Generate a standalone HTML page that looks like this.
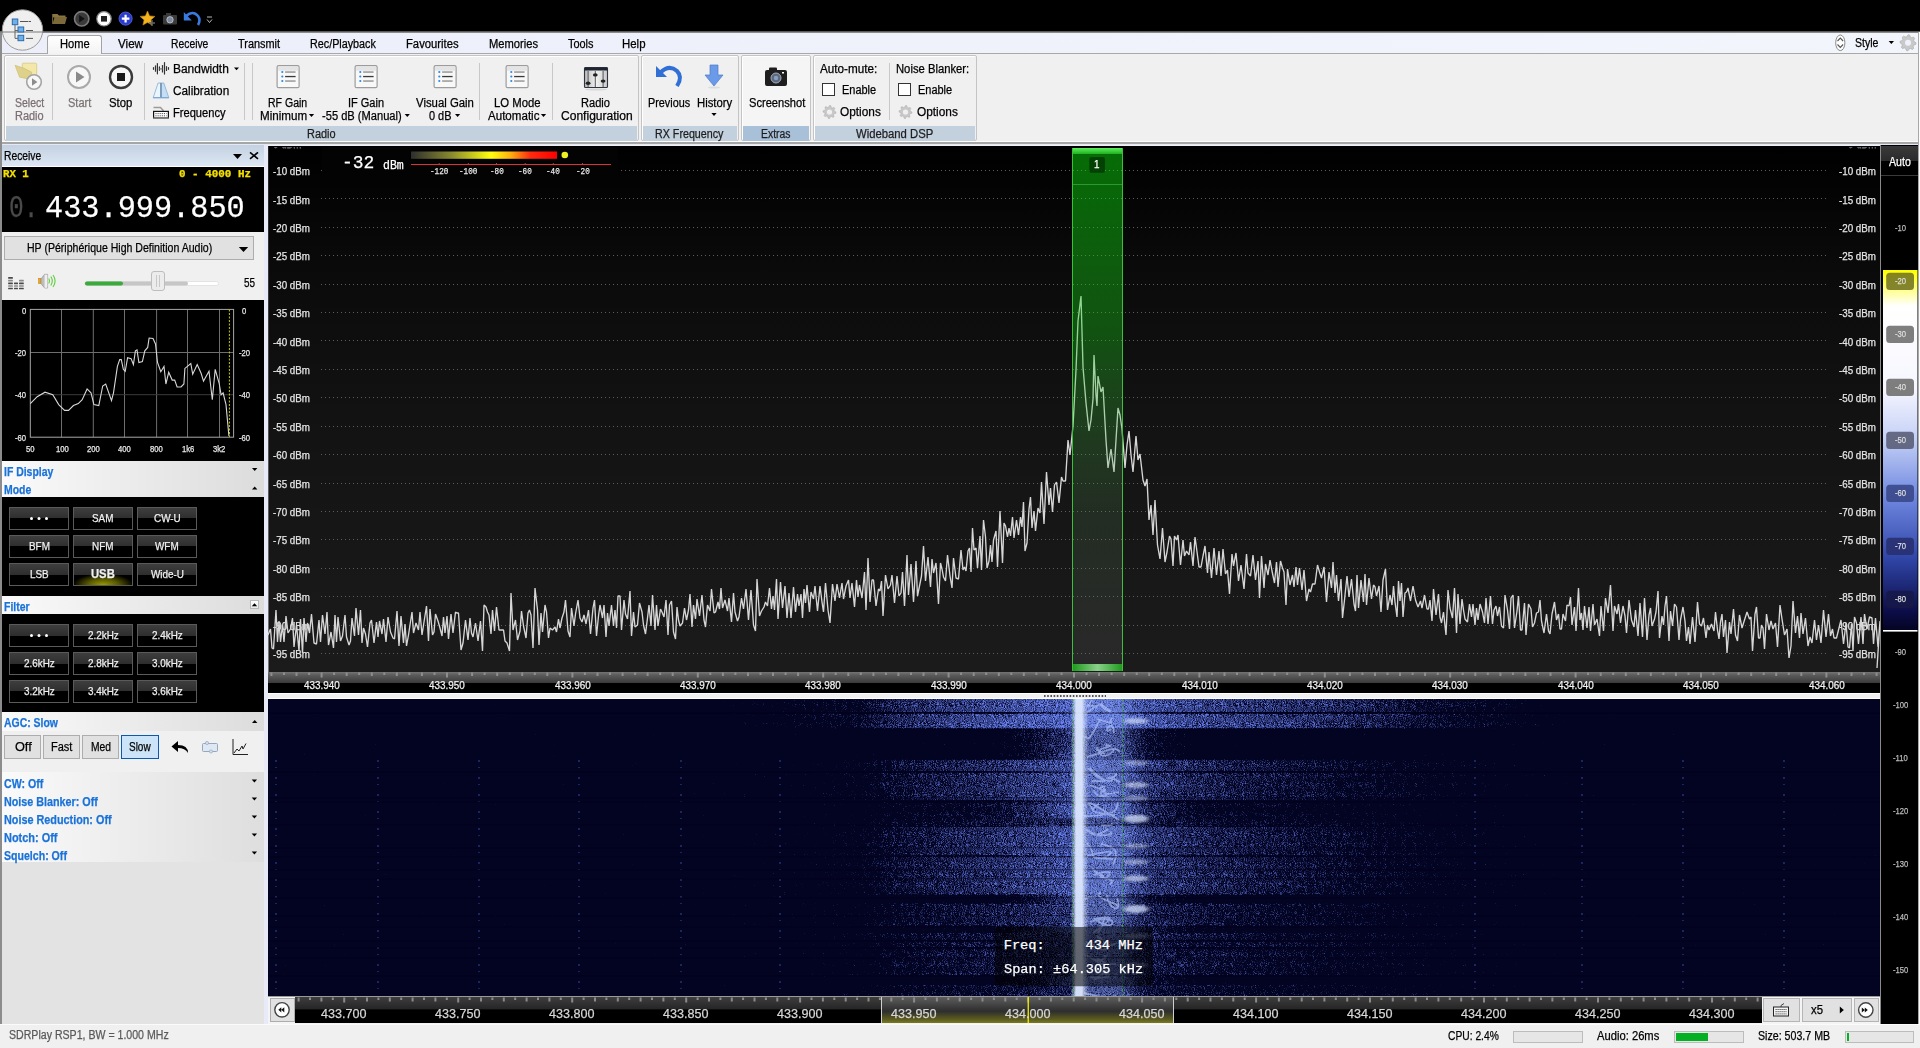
<!DOCTYPE html>
<html><head><meta charset="utf-8"><title>SDR Console</title>
<style>
html,body{margin:0;padding:0;}
body{width:1920px;height:1048px;overflow:hidden;position:relative;background:#f0f0f0;font-family:"Liberation Sans",sans-serif;}
.a{position:absolute;box-sizing:border-box;}
.t{position:absolute;white-space:nowrap;-webkit-text-stroke:0.25px currentColor;}
svg.a{overflow:visible;}
</style></head><body>

<div class="a" style="left:0px;top:0px;width:1920px;height:32px;background:#000"></div>
<div class="a" style="left:0px;top:32px;width:1920px;height:22px;background:linear-gradient(90deg,#eceffa,#f2f5fc);border-top:1px solid #8a8a8a;border-bottom:1px solid #a9a9a9"></div>
<div class="a" style="left:0px;top:31px;width:1920px;height:1px;background:#5a5a5a"></div>
<div class="a" style="left:0px;top:32px;width:2px;height:993px;background:#8c8c8c"></div>
<div class="a" style="left:1918px;top:32px;width:2px;height:993px;background:#fbfbfb;border-left:1px solid #a8a8a8"></div>
<svg class="a" style="left:0px;top:0px;" width="240" height="32" viewBox="0 0 240 32"><path d="M52.5 14 h5 l1.5 1.5 h6.5 v2 h-13z" fill="#8a7440"/><path d="M52.5 24 l2-7 h12.5 l-2 7z" fill="#7d6a3a"/><path d="M52.5 24 v-10" stroke="#6a5a30" stroke-width="1"/><circle cx="81.7" cy="18.8" r="7.2" fill="#3a3a3a" stroke="#7a7a7a" stroke-width="1.6"/><path d="M79.2 15 l5.5 3.8 -5.5 3.8z" fill="#111"/><circle cx="104" cy="18.8" r="7.2" fill="#fff" stroke="#888" stroke-width="1.2"/><rect x="101" y="16" width="6" height="5.6" fill="#222"/><circle cx="125.6" cy="18.6" r="6.6" fill="#2a3ccf" stroke="#5a6ae0" stroke-width="0.8"/><path d="M125.6 14.8 v7.6 M121.8 18.6 h7.6" stroke="#fff" stroke-width="2.2"/><polygon points="147.50,11.00 149.62,15.89 154.92,16.39 150.92,19.91 152.08,25.11 147.50,22.40 142.92,25.11 144.08,19.91 140.08,16.39 145.38,15.89" fill="#f3b321" stroke="#c98a10" stroke-width="0.6"/><path d="M152 20 v6 M149 23 h6" stroke="#666" stroke-width="1.4"/><rect x="163" y="15" width="14" height="9.5" rx="1" fill="#3a3a3a"/><rect x="166" y="13" width="5" height="2.5" fill="#3a3a3a"/><circle cx="170" cy="19.8" r="3.2" fill="#7a8aa0" stroke="#ccc" stroke-width="0.8"/><path d="M186 16 q7-6 12 0 q3 4 0 9" fill="none" stroke="#3a7ae0" stroke-width="2.6"/><path d="M183.8 12 v8.5 h8z" fill="#3a7ae0"/><path d="M207 17 h5 M207 19.5 l2.5 3 2.5-3" fill="none" stroke="#ccc" stroke-width="0.9"/></svg>
<div class="a" style="left:47px;top:35px;width:55px;height:19px;background:linear-gradient(#ffffff,#f3f3f3);border:1px solid #a3a3a3;border-bottom:none;border-radius:3px 3px 0 0"></div>
<div class="a" style="left:48px;top:53px;width:53px;height:2px;background:#f3f3f3"></div>
<div class="t" style="left:60.30px;top:37.10px;font:normal 12px/14.40px 'Liberation Sans',sans-serif;color:#000;transform:scaleX(0.9281);transform-origin:0 0;">Home</div>
<div class="t" style="left:118.00px;top:37.10px;font:normal 12px/14.40px 'Liberation Sans',sans-serif;color:#000;transform:scaleX(0.9690);transform-origin:0 0;">View</div>
<div class="t" style="left:171.30px;top:37.10px;font:normal 12px/14.40px 'Liberation Sans',sans-serif;color:#000;transform:scaleX(0.8618);transform-origin:0 0;">Receive</div>
<div class="t" style="left:238.00px;top:37.10px;font:normal 12px/14.40px 'Liberation Sans',sans-serif;color:#000;transform:scaleX(0.9091);transform-origin:0 0;">Transmit</div>
<div class="t" style="left:310.00px;top:37.10px;font:normal 12px/14.40px 'Liberation Sans',sans-serif;color:#000;transform:scaleX(0.8980);transform-origin:0 0;">Rec/Playback</div>
<div class="t" style="left:406.00px;top:37.10px;font:normal 12px/14.40px 'Liberation Sans',sans-serif;color:#000;transform:scaleX(0.9375);transform-origin:0 0;">Favourites</div>
<div class="t" style="left:489.40px;top:37.10px;font:normal 12px/14.40px 'Liberation Sans',sans-serif;color:#000;transform:scaleX(0.9317);transform-origin:0 0;">Memories</div>
<div class="t" style="left:568.00px;top:37.10px;font:normal 12px/14.40px 'Liberation Sans',sans-serif;color:#000;transform:scaleX(0.9107);transform-origin:0 0;">Tools</div>
<div class="t" style="left:622.00px;top:37.10px;font:normal 12px/14.40px 'Liberation Sans',sans-serif;color:#000;transform:scaleX(0.9514);transform-origin:0 0;">Help</div>
<svg class="a" style="left:0px;top:0px;pointer-events:none" width="1920" height="60" viewBox="0 0 1920 60"><ellipse cx="1840.3" cy="42.8" rx="4.6" ry="7.8" fill="#fff" stroke="#888" stroke-width="1"/><path d="M1837.5 41 l2.8-3 2.8 3 M1837.5 44.5 l2.8 3 2.8-3" fill="none" stroke="#555" stroke-width="1.1"/><path d="M1888.7 41 h5.3 l-2.65 2.9z" fill="#000"/><polygon points="1916.00,42.80 1915.85,44.36 1913.73,45.17 1913.16,46.24 1913.66,48.46 1912.44,49.45 1910.37,48.53 1909.21,48.88 1908.00,50.80 1906.44,50.65 1905.63,48.53 1904.56,47.96 1902.34,48.46 1901.35,47.24 1902.27,45.17 1901.92,44.01 1900.00,42.80 1900.15,41.24 1902.27,40.43 1902.84,39.36 1902.34,37.14 1903.56,36.15 1905.63,37.07 1906.79,36.72 1908.00,34.80 1909.56,34.95 1910.37,37.07 1911.44,37.64 1913.66,37.14 1914.65,38.36 1913.73,40.43 1914.08,41.59" fill="#c9c9c9" stroke="#aaa" stroke-width="0.6"/><circle cx="1908" cy="42.8" r="3" fill="#eef1fb"/></svg>
<div class="t" style="left:1855.00px;top:35.80px;font:normal 12px/14.40px 'Liberation Sans',sans-serif;color:#000;transform:scaleX(0.8771);transform-origin:0 0;">Style</div>
<div class="a" style="left:2px;top:54px;width:1916px;height:90px;background:#f0f0f0"></div>
<div class="a" style="left:2px;top:141px;width:1916px;height:1px;background:#fdfdfd"></div>
<div class="a" style="left:2px;top:142px;width:1916px;height:2px;background:#a6a6a6"></div>
<div class="a" style="left:2px;top:144px;width:1916px;height:1px;background:#e6e8f8"></div>
<div class="a" style="left:4px;top:55px;width:635px;height:86px;border:1px solid #c4c4c4;border-radius:2px;background:#f0f0f0;box-shadow:inset 1px 1px 0 #fff"></div>
<div class="a" style="left:6px;top:126px;width:631px;height:15px;background:#c3d0dd"></div>
<div class="t" style="left:306.60px;top:127.30px;font:normal 12px/14.40px 'Liberation Sans',sans-serif;color:#1e1e1e;transform:scaleX(0.9124);transform-origin:0 0;">Radio</div>
<div class="a" style="left:641px;top:55px;width:98px;height:86px;border:1px solid #c4c4c4;border-radius:2px;background:#f0f0f0;box-shadow:inset 1px 1px 0 #fff"></div>
<div class="a" style="left:643px;top:126px;width:94px;height:15px;background:#c3d0dd"></div>
<div class="t" style="left:655.30px;top:127.30px;font:normal 12px/14.40px 'Liberation Sans',sans-serif;color:#1e1e1e;transform:scaleX(0.8924);transform-origin:0 0;">RX Frequency</div>
<div class="a" style="left:741px;top:55px;width:70px;height:86px;border:1px solid #c4c4c4;border-radius:2px;background:#f5f5f5;box-shadow:inset 1px 1px 0 #fff"></div>
<div class="a" style="left:743px;top:126px;width:66px;height:15px;background:#a9c0d9"></div>
<div class="t" style="left:761.25px;top:127.30px;font:normal 12px/14.40px 'Liberation Sans',sans-serif;color:#1e1e1e;transform:scaleX(0.8662);transform-origin:0 0;">Extras</div>
<div class="a" style="left:813px;top:55px;width:164px;height:86px;border:1px solid #c4c4c4;border-radius:2px;background:#f0f0f0;box-shadow:inset 1px 1px 0 #fff"></div>
<div class="a" style="left:815px;top:126px;width:160px;height:15px;background:#c3d0dd"></div>
<div class="t" style="left:856.00px;top:127.30px;font:normal 12px/14.40px 'Liberation Sans',sans-serif;color:#1e1e1e;transform:scaleX(0.9415);transform-origin:0 0;">Wideband DSP</div>
<div class="a" style="left:52px;top:63px;width:1px;height:57px;background:#c8c8c8"></div>
<div class="a" style="left:144px;top:63px;width:1px;height:57px;background:#c8c8c8"></div>
<div class="a" style="left:244px;top:63px;width:1px;height:57px;background:#c8c8c8"></div>
<div class="a" style="left:252px;top:63px;width:1px;height:57px;background:#c8c8c8"></div>
<div class="a" style="left:479px;top:63px;width:1px;height:57px;background:#c8c8c8"></div>
<div class="a" style="left:552px;top:63px;width:1px;height:57px;background:#c8c8c8"></div>
<div class="a" style="left:889px;top:63px;width:1px;height:57px;background:#c8c8c8"></div>
<svg class="a" style="left:0px;top:0px;" width="1000" height="150" viewBox="0 0 1000 150"><rect x="22.3" y="63.2" width="14.4" height="11.5" rx="1" fill="#f3e8aa" stroke="#d6c684" stroke-width="0.8"/><polygon points="15.1,65.3 24,68.3 31.8,72.3 30,79.2 19.6,77.2" fill="#ded18a" stroke="#cdbd78" stroke-width="0.7"/><circle cx="34" cy="82" r="7.3" fill="#f7f7f7" stroke="#a4a4a4" stroke-width="1.6"/><path d="M32 78.3 l5.4 3.7 -5.4 3.7z" fill="#8c8c8c"/><circle cx="79" cy="77" r="11" fill="#f7f7f7" stroke="#a9a9a9" stroke-width="2"/><path d="M76 71.5 l8.5 5.5 -8.5 5.5z" fill="#8a8a8a"/><circle cx="121" cy="77" r="11" fill="#f7f7f7" stroke="#3a3a3a" stroke-width="2.4"/><rect x="117" y="73" width="8" height="8" fill="#1a1a1a"/><path d="M153.5 67.7 V69.3" stroke="#333" stroke-width="1.2" stroke-linecap="round"/><path d="M155.5 65.8 V71.2" stroke="#333" stroke-width="1.2" stroke-linecap="round"/><path d="M157.4 63.6 V73.8" stroke="#333" stroke-width="1.2" stroke-linecap="round"/><path d="M159.4 66.9 V70.3" stroke="#333" stroke-width="1.2" stroke-linecap="round"/><path d="M162.5 65.5 V71.9" stroke="#333" stroke-width="1.2" stroke-linecap="round"/><path d="M164.5 62.7 V74.1" stroke="#333" stroke-width="1.2" stroke-linecap="round"/><path d="M166.5 66.7 V70.5" stroke="#333" stroke-width="1.2" stroke-linecap="round"/><path d="M168.5 67.7 V69.3" stroke="#333" stroke-width="1.2" stroke-linecap="round"/><path d="M159.4 68.9 H162.5" stroke="#777" stroke-width="1.2"/><path d="M234 67.5 h5 l-2.5 2.8z" fill="#000"/><polygon points="158.1,83 161,83 161,97.7 153.2,97.7" fill="#eaf5fd" stroke="#8ab6de" stroke-width="0.9"/><polygon points="161,83 163.8,83 168.8,97.7 161,97.7" fill="#c6def4" stroke="#8ab6de" stroke-width="0.9"/><path d="M161 83 V97.7" stroke="#6a86a4" stroke-width="1.3"/><path d="M153.2 97.7 H168.8" stroke="#7aa6d0" stroke-width="1.1"/><path d="M153.5 107.5 H160.5 L163.5 110.8" fill="none" stroke="#9a9a9a" stroke-width="1.4"/><rect x="153.6" y="111.4" width="14.8" height="6.6" fill="#fff" stroke="#111" stroke-width="1.2"/><path d="M155.5 113.6 h11 M155.5 115.8 h11" stroke="#222" stroke-width="0.9" stroke-dasharray="1 1.1"/><rect x="153" y="117.6" width="16" height="1.2" fill="#888"/><rect x="277.1" y="65.7" width="22" height="22" rx="1.5" fill="#f8f8f8" stroke="#9c9c9c" stroke-width="1.2"/><rect x="278.1" y="66.7" width="20" height="4" fill="#e4e4e6"/><circle cx="282.3" cy="72.0" r="1.1" fill="#2a8ae0"/><rect x="285.1" y="71.4" width="10.5" height="1.3" fill="#8a8a8a"/><circle cx="282.3" cy="76.5" r="1.1" fill="#2a8ae0"/><rect x="285.1" y="75.9" width="10.5" height="1.3" fill="#3a3a3a"/><circle cx="282.3" cy="81.0" r="1.1" fill="#2a8ae0"/><rect x="285.1" y="80.4" width="10.5" height="1.3" fill="#8a8a8a"/><rect x="355.1" y="65.7" width="22" height="22" rx="1.5" fill="#f8f8f8" stroke="#9c9c9c" stroke-width="1.2"/><rect x="356.1" y="66.7" width="20" height="4" fill="#e4e4e6"/><circle cx="360.3" cy="72.0" r="1.1" fill="#2a8ae0"/><rect x="363.1" y="71.4" width="10.5" height="1.3" fill="#8a8a8a"/><circle cx="360.3" cy="76.5" r="1.1" fill="#2a8ae0"/><rect x="363.1" y="75.9" width="10.5" height="1.3" fill="#3a3a3a"/><circle cx="360.3" cy="81.0" r="1.1" fill="#2a8ae0"/><rect x="363.1" y="80.4" width="10.5" height="1.3" fill="#8a8a8a"/><rect x="434.1" y="65.7" width="22" height="22" rx="1.5" fill="#f8f8f8" stroke="#9c9c9c" stroke-width="1.2"/><rect x="435.1" y="66.7" width="20" height="4" fill="#e4e4e6"/><circle cx="439.3" cy="72.0" r="1.1" fill="#2a8ae0"/><rect x="442.1" y="71.4" width="10.5" height="1.3" fill="#8a8a8a"/><circle cx="439.3" cy="76.5" r="1.1" fill="#2a8ae0"/><rect x="442.1" y="75.9" width="10.5" height="1.3" fill="#3a3a3a"/><circle cx="439.3" cy="81.0" r="1.1" fill="#2a8ae0"/><rect x="442.1" y="80.4" width="10.5" height="1.3" fill="#8a8a8a"/><rect x="506.1" y="65.7" width="22" height="22" rx="1.5" fill="#f8f8f8" stroke="#9c9c9c" stroke-width="1.2"/><rect x="507.1" y="66.7" width="20" height="4" fill="#e4e4e6"/><circle cx="511.3" cy="72.0" r="1.1" fill="#2a8ae0"/><rect x="514.1" y="71.4" width="10.5" height="1.3" fill="#8a8a8a"/><circle cx="511.3" cy="76.5" r="1.1" fill="#2a8ae0"/><rect x="514.1" y="75.9" width="10.5" height="1.3" fill="#3a3a3a"/><circle cx="511.3" cy="81.0" r="1.1" fill="#2a8ae0"/><rect x="514.1" y="80.4" width="10.5" height="1.3" fill="#8a8a8a"/><defs><linearGradient id="rcg" x1="0" x2="1"><stop offset="0" stop-color="#b8b8b8"/><stop offset="0.5" stop-color="#f2f2f2"/><stop offset="1" stop-color="#c8c8c8"/></linearGradient></defs><rect x="584.5" y="67.5" width="23" height="20" rx="1" fill="url(#rcg)" stroke="#2e3440" stroke-width="1.1"/><rect x="584.5" y="67.5" width="23" height="3" fill="#1e2430"/><path d="M588.1 71 v16" stroke="#444" stroke-width="0.9"/><ellipse cx="588.1" cy="83.3" rx="2.4" ry="1.7" fill="#222"/><path d="M595.3 71 v16" stroke="#444" stroke-width="0.9"/><ellipse cx="595.3" cy="74.9" rx="2.4" ry="1.7" fill="#222"/><path d="M603.1 71 v16" stroke="#444" stroke-width="0.9"/><ellipse cx="603.1" cy="81.1" rx="2.4" ry="1.7" fill="#222"/><ellipse cx="596" cy="89.5" rx="11" ry="1" fill="#d8d8d8"/><path d="M308.9 114.1 h5.2 l-2.6 2.8z" fill="#000"/><path d="M404.7 114.1 h5.2 l-2.6 2.8z" fill="#000"/><path d="M455.0 114.1 h5.2 l-2.6 2.8z" fill="#000"/><path d="M540.9 114.1 h5.2 l-2.6 2.8z" fill="#000"/><path d="M711.4 113.1 h5.2 l-2.6 2.8z" fill="#000"/><path d="M660 73 q9-9 17-2 q6 6 0 15" fill="none" stroke="#2f6fd6" stroke-width="4"/><path d="M656 66 v11 h11z" fill="#2f6fd6"/><path d="M710 65 h8 v10 h5 l-9 11 -9-11 h5z" fill="#6a9ae8" stroke="#4a7ac8" stroke-width="0.7"/><ellipse cx="714" cy="87.5" rx="6" ry="1" fill="#ddd"/><rect x="765" y="70" width="22" height="16" rx="2" fill="#1e1e1e"/><rect x="769" y="67.5" width="8" height="4" rx="1" fill="#1e1e1e"/><circle cx="776" cy="78" r="5" fill="#5a6a80" stroke="#aab" stroke-width="1"/><circle cx="776" cy="78" r="2.2" fill="#8aa0c0"/><rect x="782" y="72" width="2" height="1.5" fill="#fff"/><rect x="822.5" y="83.5" width="12" height="12" fill="#fff" stroke="#333" stroke-width="1"/><polygon points="836.00,112.00 835.88,113.27 833.93,113.84 833.49,114.67 834.10,116.60 833.11,117.40 831.34,116.43 830.44,116.71 829.50,118.50 828.23,118.38 827.66,116.43 826.83,115.99 824.90,116.60 824.10,115.61 825.07,113.84 824.79,112.94 823.00,112.00 823.12,110.73 825.07,110.16 825.51,109.33 824.90,107.40 825.89,106.60 827.66,107.57 828.56,107.29 829.50,105.50 830.77,105.62 831.34,107.57 832.17,108.01 834.10,107.40 834.90,108.39 833.93,110.16 834.21,111.06" fill="#c8c8c8" stroke="#aaa" stroke-width="0.5"/><circle cx="829.5" cy="112" r="2.6" fill="#f0f0f0"/><rect x="898.5" y="83.5" width="12" height="12" fill="#fff" stroke="#333" stroke-width="1"/><polygon points="912.00,112.00 911.88,113.27 909.93,113.84 909.49,114.67 910.10,116.60 909.11,117.40 907.34,116.43 906.44,116.71 905.50,118.50 904.23,118.38 903.66,116.43 902.83,115.99 900.90,116.60 900.10,115.61 901.07,113.84 900.79,112.94 899.00,112.00 899.12,110.73 901.07,110.16 901.51,109.33 900.90,107.40 901.89,106.60 903.66,107.57 904.56,107.29 905.50,105.50 906.77,105.62 907.34,107.57 908.17,108.01 910.10,107.40 910.90,108.39 909.93,110.16 910.21,111.06" fill="#c8c8c8" stroke="#aaa" stroke-width="0.5"/><circle cx="905.5" cy="112" r="2.6" fill="#f0f0f0"/></svg>
<div class="t" style="left:14.50px;top:95.80px;font:normal 12px/14.40px 'Liberation Sans',sans-serif;color:#7a6e72;transform:scaleX(0.8743);transform-origin:0 0;">Select</div>
<div class="t" style="left:14.50px;top:108.80px;font:normal 12px/14.40px 'Liberation Sans',sans-serif;color:#7a6e72;transform:scaleX(0.9140);transform-origin:0 0;">Radio</div>
<div class="t" style="left:67.50px;top:95.80px;font:normal 12px/14.40px 'Liberation Sans',sans-serif;color:#7a7272;transform:scaleX(0.9209);transform-origin:0 0;">Start</div>
<div class="t" style="left:109.20px;top:95.80px;font:normal 12px/14.40px 'Liberation Sans',sans-serif;color:#000;transform:scaleX(0.9433);transform-origin:0 0;">Stop</div>
<div class="t" style="left:172.50px;top:61.80px;font:normal 12px/14.40px 'Liberation Sans',sans-serif;color:#000;transform:scaleX(0.9964);transform-origin:0 0;">Bandwidth</div>
<div class="t" style="left:172.50px;top:83.80px;font:normal 12px/14.40px 'Liberation Sans',sans-serif;color:#000;transform:scaleX(0.9791);transform-origin:0 0;">Calibration</div>
<div class="t" style="left:172.50px;top:105.80px;font:normal 12px/14.40px 'Liberation Sans',sans-serif;color:#000;transform:scaleX(0.9259);transform-origin:0 0;">Frequency</div>
<div class="t" style="left:268.30px;top:95.80px;font:normal 12px/14.40px 'Liberation Sans',sans-serif;color:#000;transform:scaleX(0.8770);transform-origin:0 0;">RF Gain</div>
<div class="t" style="left:260.30px;top:108.80px;font:normal 12px/14.40px 'Liberation Sans',sans-serif;color:#000;transform:scaleX(0.9692);transform-origin:0 0;">Minimum</div>
<div class="t" style="left:347.80px;top:95.80px;font:normal 12px/14.40px 'Liberation Sans',sans-serif;color:#000;transform:scaleX(0.9160);transform-origin:0 0;">IF Gain</div>
<div class="t" style="left:321.60px;top:108.80px;font:normal 12px/14.40px 'Liberation Sans',sans-serif;color:#000;transform:scaleX(0.9262);transform-origin:0 0;">-55 dB (Manual)</div>
<div class="t" style="left:415.90px;top:95.80px;font:normal 12px/14.40px 'Liberation Sans',sans-serif;color:#000;transform:scaleX(0.9476);transform-origin:0 0;">Visual Gain</div>
<div class="t" style="left:429.00px;top:108.80px;font:normal 12px/14.40px 'Liberation Sans',sans-serif;color:#000;transform:scaleX(0.9109);transform-origin:0 0;">0 dB</div>
<div class="t" style="left:494.00px;top:95.80px;font:normal 12px/14.40px 'Liberation Sans',sans-serif;color:#000;transform:scaleX(0.9433);transform-origin:0 0;">LO Mode</div>
<div class="t" style="left:487.50px;top:108.80px;font:normal 12px/14.40px 'Liberation Sans',sans-serif;color:#000;transform:scaleX(0.9644);transform-origin:0 0;">Automatic</div>
<div class="t" style="left:581.30px;top:95.80px;font:normal 12px/14.40px 'Liberation Sans',sans-serif;color:#000;transform:scaleX(0.9236);transform-origin:0 0;">Radio</div>
<div class="t" style="left:560.60px;top:108.80px;font:normal 12px/14.40px 'Liberation Sans',sans-serif;color:#000;transform:scaleX(1.0042);transform-origin:0 0;">Configuration</div>
<div class="t" style="left:648.20px;top:95.80px;font:normal 12px/14.40px 'Liberation Sans',sans-serif;color:#000;transform:scaleX(0.9036);transform-origin:0 0;">Previous</div>
<div class="t" style="left:696.60px;top:95.80px;font:normal 12px/14.40px 'Liberation Sans',sans-serif;color:#000;transform:scaleX(0.9437);transform-origin:0 0;">History</div>
<div class="t" style="left:748.50px;top:95.80px;font:normal 12px/14.40px 'Liberation Sans',sans-serif;color:#000;transform:scaleX(0.9267);transform-origin:0 0;">Screenshot</div>
<div class="t" style="left:820.30px;top:62.20px;font:normal 12px/14.40px 'Liberation Sans',sans-serif;color:#000;transform:scaleX(0.9744);transform-origin:0 0;">Auto-mute:</div>
<div class="t" style="left:841.50px;top:82.80px;font:normal 12px/14.40px 'Liberation Sans',sans-serif;color:#000;transform:scaleX(0.9118);transform-origin:0 0;">Enable</div>
<div class="t" style="left:840.40px;top:104.80px;font:normal 12px/14.40px 'Liberation Sans',sans-serif;color:#000;transform:scaleX(0.9867);transform-origin:0 0;">Options</div>
<div class="t" style="left:896.30px;top:62.20px;font:normal 12px/14.40px 'Liberation Sans',sans-serif;color:#000;transform:scaleX(0.9372);transform-origin:0 0;">Noise Blanker:</div>
<div class="t" style="left:917.60px;top:82.80px;font:normal 12px/14.40px 'Liberation Sans',sans-serif;color:#000;transform:scaleX(0.9118);transform-origin:0 0;">Enable</div>
<div class="t" style="left:916.60px;top:104.80px;font:normal 12px/14.40px 'Liberation Sans',sans-serif;color:#000;transform:scaleX(0.9879);transform-origin:0 0;">Options</div>
<svg class="a" style="left:0px;top:0px;" width="50" height="55" viewBox="0 0 50 55"><circle cx="22.5" cy="30" r="20.2" fill="#efefef" stroke="#9a9a9a" stroke-width="1"/><path d="M0 32 h44" stroke="#7a7a7a" stroke-width="1.2"/><rect x="12.3" y="19" width="5.5" height="5.7" fill="#6fb0e8" stroke="#2a6ab0" stroke-width="1"/><rect x="18" y="27" width="5.7" height="5" fill="#6fb0e8" stroke="#2a6ab0" stroke-width="1"/><rect x="18" y="35.3" width="5.7" height="5.4" fill="#6fb0e8" stroke="#2a6ab0" stroke-width="1"/><path d="M15 24.7 v13.7 h3 M15 30.5 h3" stroke="#666" stroke-width="1" fill="none"/><path d="M20 21.5 h8 M28.5 21.5 h2.5 M26 30.5 h7 M26 38.4 h7" stroke="#555" stroke-width="1"/></svg>
<div class="a" style="left:2px;top:145px;width:262px;height:880px;background:#e3e3e3"></div>
<div class="a" style="left:264px;top:145px;width:4px;height:880px;background:#e8eaf8"></div>
<div class="a" style="left:2px;top:145px;width:262px;height:21px;background:linear-gradient(#c3d1e1,#dde7f3)"></div>
<div class="a" style="left:2px;top:166px;width:262px;height:1px;background:#fff"></div>
<div class="t" style="left:4.30px;top:149.00px;font:normal 12px/14.40px 'Liberation Sans',sans-serif;color:#000;transform:scaleX(0.8581);transform-origin:0 0;">Receive</div>
<svg class="a" style="left:0px;top:0px;" width="270" height="170" viewBox="0 0 270 170"><path d="M233 154 h9 l-4.5 5z" fill="#000"/><path d="M250 152.3 l8 6.6 M258 152.3 l-8 6.6" stroke="#000" stroke-width="1.6"/></svg>
<div class="a" style="left:2px;top:167px;width:262px;height:65px;background:#000"></div>
<div class="t" style="left:3.30px;top:168.40px;font:bold 11px/13.20px 'Liberation Mono',monospace;color:#f5e000;transform:scaleX(0.9733);transform-origin:0 0;">RX 1</div>
<div class="t" style="left:178.70px;top:168.40px;font:bold 11px/13.20px 'Liberation Mono',monospace;color:#f5e000;transform:scaleX(0.9915);transform-origin:0 0;">0 - 4000 Hz</div>
<div class="t" style="left:9.00px;top:189.90px;font:normal 31.5px/37.80px 'Liberation Mono',monospace;color:#4a4a4a;transform:scaleX(0.7804);transform-origin:0 0;">0.</div>
<div class="t" style="left:44.80px;top:189.90px;font:normal 31.5px/37.80px 'Liberation Mono',monospace;color:#fff;transform:scaleX(0.9606);transform-origin:0 0;">433.999.850</div>
<div class="a" style="left:2px;top:232px;width:262px;height:68px;background:#f0f0f0"></div>
<div class="a" style="left:4px;top:236px;width:250px;height:24px;background:#e1e1e1;border:1px solid #adadad"></div>
<div class="t" style="left:26.60px;top:241.00px;font:normal 12px/14.40px 'Liberation Sans',sans-serif;color:#000;transform:scaleX(0.8796);transform-origin:0 0;">HP (Périphérique High Definition Audio)</div>
<svg class="a" style="left:0px;top:0px;" width="270" height="300" viewBox="0 0 270 300"><path d="M238.8 247 h9.4 l-4.7 5z" fill="#000"/><rect x="8.1" y="287.7" width="4.8" height="1.6" rx="0.5" fill="#4a4a4a"/><rect x="8.1" y="285.2" width="4.8" height="1.6" rx="0.5" fill="#8a8a8a"/><rect x="8.1" y="282.6" width="4.8" height="1.6" rx="0.5" fill="#4a4a4a"/><rect x="8.1" y="279.8" width="4.8" height="1.6" rx="0.5" fill="#8a8a8a"/><rect x="8.1" y="277.1" width="4.8" height="1.6" rx="0.5" fill="#4a4a4a"/><rect x="14" y="287.7" width="4" height="1.6" rx="0.5" fill="#4a4a4a"/><rect x="14" y="285.2" width="4" height="1.6" rx="0.5" fill="#8a8a8a"/><rect x="14" y="282.6" width="4" height="1.6" rx="0.5" fill="#4a4a4a"/><rect x="19" y="287.7" width="4.8" height="1.6" rx="0.5" fill="#4a4a4a"/><rect x="19" y="285.2" width="4.8" height="1.6" rx="0.5" fill="#8a8a8a"/><rect x="19" y="282.6" width="4.8" height="1.6" rx="0.5" fill="#4a4a4a"/><rect x="19" y="279.8" width="4.8" height="1.6" rx="0.5" fill="#8a8a8a"/><rect x="38.4" y="278.2" width="2.6" height="5.5" fill="#f0a818" stroke="#b07a10" stroke-width="0.4"/><polygon points="41,279 44.6,274.3 47.6,274.3 47.6,288 44.6,288 41,283.7" fill="#bdbdbd" stroke="#888" stroke-width="0.6"/><rect x="44.6" y="274.6" width="2.8" height="13.2" fill="#efefef"/><path d="M48.8 278.5 q1.5 2.5 0 5 M50.8 276.5 q3 4.5 0 9 M53 275 q4.2 6 0 12" fill="none" stroke="#5ad03a" stroke-width="1.1"/><rect x="85" y="281.5" width="133.5" height="4" rx="2" fill="#fff" stroke="#d6d6d6" stroke-width="0.6"/><rect x="85" y="281.5" width="103" height="4" rx="2" fill="#c6c6c6"/><rect x="85" y="281.5" width="38" height="4" rx="2" fill="#3aaa3a"/><rect x="151.5" y="271.5" width="13" height="19" rx="2.5" fill="#ececec" stroke="#bdbdbd" stroke-width="1"/><path d="M156.5 275 v12 M159.5 275 v12" stroke="#c8c8c8" stroke-width="1"/></svg>
<div class="t" style="left:243.50px;top:275.80px;font:normal 12px/14.40px 'Liberation Sans',sans-serif;color:#000;transform:scaleX(0.8242);transform-origin:0 0;">55</div>
<div class="a" style="left:2px;top:300px;width:262px;height:161px;background:#000"></div>
<svg class="a" style="left:0px;top:0px;" width="270" height="470" viewBox="0 0 270 470"><path d="M61.5 309.4 V437.2" stroke="#6e6e6e" stroke-width="1"/><path d="M93.3 309.4 V437.2" stroke="#6e6e6e" stroke-width="1"/><path d="M124.5 309.4 V437.2" stroke="#6e6e6e" stroke-width="1"/><path d="M156.6 309.4 V437.2" stroke="#6e6e6e" stroke-width="1"/><path d="M187.5 309.4 V437.2" stroke="#6e6e6e" stroke-width="1"/><path d="M219.5 309.4 V437.2" stroke="#6e6e6e" stroke-width="1"/><path d="M30.3 352.5 H233.6" stroke="#6e6e6e" stroke-width="1"/><path d="M30.3 394.7 H233.6" stroke="#3c3c3c" stroke-width="1"/><rect x="30.3" y="309.4" width="203.3" height="127.8" fill="none" stroke="#a8a8a8" stroke-width="1"/><path d="M229.4 309.5 V437" stroke="#c8c800" stroke-width="1" stroke-dasharray="2 1.5"/><polyline fill="none" stroke="#d8d8d8" stroke-width="1.1" points="30.3,403.6 37.2,396.7 45,392.2 52.8,394.8 58.7,404.6 64.6,410.4 68.5,410.4 73.4,405.5 78.3,403.6 82.2,399.7 87.1,388.9 91,392.8 93.9,404.6 98.8,405.5 102.7,386 105.7,384 111.5,400.7 113.5,392.8 117.4,366.4 119.7,359.6 121.3,359.6 123.3,369.3 125.2,371.3 127.6,357.6 131.1,358.6 133.4,364.5 135.4,350.8 137,349.8 138.9,362.5 142.4,361.5 144.8,350.8 147.7,347.4 149.1,338 153,338.4 155.5,343.9 157.5,362.5 160.8,371.7 164,366.4 165.9,384 168.7,372.3 172.2,380.1 174.7,380.1 177.1,387 181,387 183.9,384 184.9,368.4 190.8,363.5 192.7,374.2 197.2,364.5 201.1,373.3 203.5,381.1 209,371.3 212.3,399.7 215.2,369.3 219.1,383 221.1,394.8 223.1,392.8 226,404.6 228.9,435.9"/></svg>
<div class="t" style="left:21.55px;top:305.60px;font:normal 8.5px/10.20px 'Liberation Sans',sans-serif;color:#e8e8e8;transform:scaleX(0.9000);transform-origin:0 0;">0</div>
<div class="t" style="left:242.00px;top:305.60px;font:normal 8.5px/10.20px 'Liberation Sans',sans-serif;color:#e8e8e8;transform:scaleX(0.9000);transform-origin:0 0;">0</div>
<div class="t" style="left:14.74px;top:347.90px;font:normal 8.5px/10.20px 'Liberation Sans',sans-serif;color:#e8e8e8;transform:scaleX(0.9000);transform-origin:0 0;">-20</div>
<div class="t" style="left:239.30px;top:347.90px;font:normal 8.5px/10.20px 'Liberation Sans',sans-serif;color:#e8e8e8;transform:scaleX(0.9000);transform-origin:0 0;">-20</div>
<div class="t" style="left:14.74px;top:390.40px;font:normal 8.5px/10.20px 'Liberation Sans',sans-serif;color:#e8e8e8;transform:scaleX(0.9000);transform-origin:0 0;">-40</div>
<div class="t" style="left:239.30px;top:390.40px;font:normal 8.5px/10.20px 'Liberation Sans',sans-serif;color:#e8e8e8;transform:scaleX(0.9000);transform-origin:0 0;">-40</div>
<div class="t" style="left:14.74px;top:433.30px;font:normal 8.5px/10.20px 'Liberation Sans',sans-serif;color:#e8e8e8;transform:scaleX(0.9000);transform-origin:0 0;">-60</div>
<div class="t" style="left:239.30px;top:433.30px;font:normal 8.5px/10.20px 'Liberation Sans',sans-serif;color:#e8e8e8;transform:scaleX(0.9000);transform-origin:0 0;">-60</div>
<div class="t" style="left:26.05px;top:444.20px;font:normal 8.5px/10.20px 'Liberation Sans',sans-serif;color:#e8e8e8;transform:scaleX(0.9000);transform-origin:0 0;">50</div>
<div class="t" style="left:55.62px;top:444.20px;font:normal 8.5px/10.20px 'Liberation Sans',sans-serif;color:#e8e8e8;transform:scaleX(0.9000);transform-origin:0 0;">100</div>
<div class="t" style="left:86.92px;top:444.20px;font:normal 8.5px/10.20px 'Liberation Sans',sans-serif;color:#e8e8e8;transform:scaleX(0.9000);transform-origin:0 0;">200</div>
<div class="t" style="left:118.12px;top:444.20px;font:normal 8.5px/10.20px 'Liberation Sans',sans-serif;color:#e8e8e8;transform:scaleX(0.9000);transform-origin:0 0;">400</div>
<div class="t" style="left:149.92px;top:444.20px;font:normal 8.5px/10.20px 'Liberation Sans',sans-serif;color:#e8e8e8;transform:scaleX(0.9000);transform-origin:0 0;">800</div>
<div class="t" style="left:181.73px;top:444.20px;font:normal 8.5px/10.20px 'Liberation Sans',sans-serif;color:#e8e8e8;transform:scaleX(0.9000);transform-origin:0 0;">1k6</div>
<div class="t" style="left:212.83px;top:444.20px;font:normal 8.5px/10.20px 'Liberation Sans',sans-serif;color:#e8e8e8;transform:scaleX(0.9000);transform-origin:0 0;">3k2</div>
<div class="a" style="left:2px;top:461px;width:262px;height:18px;background:linear-gradient(90deg,#fafafa,#dcdcdc)"></div>
<div class="t" style="left:3.60px;top:464.80px;font:bold 12px/14.40px 'Liberation Sans',sans-serif;color:#1a72d8;transform:scaleX(0.8700);transform-origin:0 0;">IF Display</div>
<svg class="a" style="left:0px;top:0px;" width="270" height="1048" viewBox="0 0 270 1048"><path d="M252 468.0 h5.4 l-2.7 3z" fill="#000"/></svg>
<div class="a" style="left:2px;top:479px;width:262px;height:18px;background:linear-gradient(90deg,#fafafa,#dcdcdc)"></div>
<div class="t" style="left:3.60px;top:482.80px;font:bold 12px/14.40px 'Liberation Sans',sans-serif;color:#1a72d8;transform:scaleX(0.8700);transform-origin:0 0;">Mode</div>
<svg class="a" style="left:0px;top:0px;" width="270" height="1048" viewBox="0 0 270 1048"><path d="M252 489.5 h5.4 l-2.7 -3z" fill="#000"/></svg>
<div class="a" style="left:2px;top:497px;width:262px;height:99px;background:#000"></div>
<div class="a" style="left:9px;top:507px;width:60px;height:23px;background:linear-gradient(#3e3e3e,#2e2e2e 50%,#000 50%,#000);border:1px solid #5a5a5a"></div>
<svg class="a" style="left:0px;top:0px;" width="270" height="1048" viewBox="0 0 270 1048"><circle cx="31.5" cy="518.5" r="1.5" fill="#fff"/><circle cx="39.0" cy="518.5" r="1.5" fill="#fff"/><circle cx="46.5" cy="518.5" r="1.5" fill="#fff"/></svg>
<div class="a" style="left:73px;top:507px;width:60px;height:23px;background:linear-gradient(#3e3e3e,#2e2e2e 50%,#000 50%,#000);border:1px solid #5a5a5a"></div>
<div class="t" style="left:92.27px;top:511.90px;font:normal 11px/13.20px 'Liberation Sans',sans-serif;color:#f0f0f0;transform:scaleX(0.9000);transform-origin:0 0;">SAM</div>
<div class="a" style="left:137px;top:507px;width:60px;height:23px;background:linear-gradient(#3e3e3e,#2e2e2e 50%,#000 50%,#000);border:1px solid #5a5a5a"></div>
<div class="t" style="left:153.62px;top:511.90px;font:normal 11px/13.20px 'Liberation Sans',sans-serif;color:#f0f0f0;transform:scaleX(0.9000);transform-origin:0 0;">CW-U</div>
<div class="a" style="left:9px;top:535px;width:60px;height:23px;background:linear-gradient(#3e3e3e,#2e2e2e 50%,#000 50%,#000);border:1px solid #5a5a5a"></div>
<div class="t" style="left:28.55px;top:539.90px;font:normal 11px/13.20px 'Liberation Sans',sans-serif;color:#f0f0f0;transform:scaleX(0.9000);transform-origin:0 0;">BFM</div>
<div class="a" style="left:73px;top:535px;width:60px;height:23px;background:linear-gradient(#3e3e3e,#2e2e2e 50%,#000 50%,#000);border:1px solid #5a5a5a"></div>
<div class="t" style="left:92.28px;top:539.90px;font:normal 11px/13.20px 'Liberation Sans',sans-serif;color:#f0f0f0;transform:scaleX(0.9000);transform-origin:0 0;">NFM</div>
<div class="a" style="left:137px;top:535px;width:60px;height:23px;background:linear-gradient(#3e3e3e,#2e2e2e 50%,#000 50%,#000);border:1px solid #5a5a5a"></div>
<div class="t" style="left:155.18px;top:539.90px;font:normal 11px/13.20px 'Liberation Sans',sans-serif;color:#f0f0f0;transform:scaleX(0.9000);transform-origin:0 0;">WFM</div>
<div class="a" style="left:9px;top:563px;width:60px;height:23px;background:linear-gradient(#3e3e3e,#2e2e2e 50%,#000 50%,#000);border:1px solid #5a5a5a"></div>
<div class="t" style="left:29.64px;top:567.90px;font:normal 11px/13.20px 'Liberation Sans',sans-serif;color:#f0f0f0;transform:scaleX(0.9000);transform-origin:0 0;">LSB</div>
<div class="a" style="left:73px;top:563px;width:60px;height:23px;background:linear-gradient(#3e3e3e,#2e2e2e 50%,#000 50%,#000);border:1px solid #5a5a5a"></div>
<div class="a" style="left:74px;top:573px;width:58px;height:12px;background:radial-gradient(ellipse 52% 95% at 50% 100%,#9a9a00 0%,rgba(120,120,0,0.75) 50%,rgba(0,0,0,0) 100%)"></div>
<div class="t" style="left:91.12px;top:567.00px;font:bold 12.5px/15.00px 'Liberation Sans',sans-serif;color:#f0f0f0;transform:scaleX(0.9000);transform-origin:0 0;">USB</div>
<div class="a" style="left:137px;top:563px;width:60px;height:23px;background:linear-gradient(#3e3e3e,#2e2e2e 50%,#000 50%,#000);border:1px solid #5a5a5a"></div>
<div class="t" style="left:150.50px;top:567.90px;font:normal 11px/13.20px 'Liberation Sans',sans-serif;color:#f0f0f0;transform:scaleX(0.9000);transform-origin:0 0;">Wide-U</div>
<div class="a" style="left:2px;top:596px;width:262px;height:18px;background:linear-gradient(90deg,#fafafa,#dcdcdc)"></div>
<div class="t" style="left:3.60px;top:599.80px;font:bold 12px/14.40px 'Liberation Sans',sans-serif;color:#1a72d8;transform:scaleX(0.8700);transform-origin:0 0;">Filter</div>
<div class="a" style="left:250px;top:600px;width:9px;height:9px;background:linear-gradient(#fff,#e8e8e8);border:1px solid #b8b8b8"></div>
<svg class="a" style="left:0px;top:0px;" width="270" height="1048" viewBox="0 0 270 1048"><path d="M251.8 606.3 h5.4 l-2.7 -3z" fill="#000"/></svg>
<div class="a" style="left:2px;top:614px;width:262px;height:98px;background:#000"></div>
<div class="a" style="left:9px;top:624px;width:60px;height:23px;background:linear-gradient(#3e3e3e,#2e2e2e 50%,#000 50%,#000);border:1px solid #5a5a5a"></div>
<svg class="a" style="left:0px;top:0px;" width="270" height="1048" viewBox="0 0 270 1048"><circle cx="31.5" cy="635.5" r="1.5" fill="#fff"/><circle cx="39.0" cy="635.5" r="1.5" fill="#fff"/><circle cx="46.5" cy="635.5" r="1.5" fill="#fff"/></svg>
<div class="a" style="left:73px;top:624px;width:60px;height:23px;background:linear-gradient(#3e3e3e,#2e2e2e 50%,#000 50%,#000);border:1px solid #5a5a5a"></div>
<div class="t" style="left:87.59px;top:628.90px;font:normal 11px/13.20px 'Liberation Sans',sans-serif;color:#f0f0f0;transform:scaleX(0.9000);transform-origin:0 0;">2.2kHz</div>
<div class="a" style="left:137px;top:624px;width:60px;height:23px;background:linear-gradient(#3e3e3e,#2e2e2e 50%,#000 50%,#000);border:1px solid #5a5a5a"></div>
<div class="t" style="left:151.59px;top:628.90px;font:normal 11px/13.20px 'Liberation Sans',sans-serif;color:#f0f0f0;transform:scaleX(0.9000);transform-origin:0 0;">2.4kHz</div>
<div class="a" style="left:9px;top:652px;width:60px;height:23px;background:linear-gradient(#3e3e3e,#2e2e2e 50%,#000 50%,#000);border:1px solid #5a5a5a"></div>
<div class="t" style="left:23.59px;top:656.90px;font:normal 11px/13.20px 'Liberation Sans',sans-serif;color:#f0f0f0;transform:scaleX(0.9000);transform-origin:0 0;">2.6kHz</div>
<div class="a" style="left:73px;top:652px;width:60px;height:23px;background:linear-gradient(#3e3e3e,#2e2e2e 50%,#000 50%,#000);border:1px solid #5a5a5a"></div>
<div class="t" style="left:87.59px;top:656.90px;font:normal 11px/13.20px 'Liberation Sans',sans-serif;color:#f0f0f0;transform:scaleX(0.9000);transform-origin:0 0;">2.8kHz</div>
<div class="a" style="left:137px;top:652px;width:60px;height:23px;background:linear-gradient(#3e3e3e,#2e2e2e 50%,#000 50%,#000);border:1px solid #5a5a5a"></div>
<div class="t" style="left:151.59px;top:656.90px;font:normal 11px/13.20px 'Liberation Sans',sans-serif;color:#f0f0f0;transform:scaleX(0.9000);transform-origin:0 0;">3.0kHz</div>
<div class="a" style="left:9px;top:680px;width:60px;height:23px;background:linear-gradient(#3e3e3e,#2e2e2e 50%,#000 50%,#000);border:1px solid #5a5a5a"></div>
<div class="t" style="left:23.59px;top:684.90px;font:normal 11px/13.20px 'Liberation Sans',sans-serif;color:#f0f0f0;transform:scaleX(0.9000);transform-origin:0 0;">3.2kHz</div>
<div class="a" style="left:73px;top:680px;width:60px;height:23px;background:linear-gradient(#3e3e3e,#2e2e2e 50%,#000 50%,#000);border:1px solid #5a5a5a"></div>
<div class="t" style="left:87.59px;top:684.90px;font:normal 11px/13.20px 'Liberation Sans',sans-serif;color:#f0f0f0;transform:scaleX(0.9000);transform-origin:0 0;">3.4kHz</div>
<div class="a" style="left:137px;top:680px;width:60px;height:23px;background:linear-gradient(#3e3e3e,#2e2e2e 50%,#000 50%,#000);border:1px solid #5a5a5a"></div>
<div class="t" style="left:151.59px;top:684.90px;font:normal 11px/13.20px 'Liberation Sans',sans-serif;color:#f0f0f0;transform:scaleX(0.9000);transform-origin:0 0;">3.6kHz</div>
<div class="a" style="left:2px;top:712px;width:262px;height:19px;background:linear-gradient(90deg,#fafafa,#dcdcdc)"></div>
<div class="t" style="left:3.60px;top:716.30px;font:bold 12px/14.40px 'Liberation Sans',sans-serif;color:#1a72d8;transform:scaleX(0.8700);transform-origin:0 0;">AGC: Slow</div>
<svg class="a" style="left:0px;top:0px;" width="270" height="1048" viewBox="0 0 270 1048"><path d="M252 723.0 h5.4 l-2.7 -3z" fill="#000"/></svg>
<div class="a" style="left:2px;top:731px;width:262px;height:41px;background:#f0f0f0"></div>
<div class="a" style="left:4px;top:735px;width:37px;height:24px;background:#e1e1e1;border:1px solid #adadad"></div>
<div class="t" style="left:14.70px;top:740.10px;font:normal 12px/14.40px 'Liberation Sans',sans-serif;color:#000;transform:scaleX(1.0579);transform-origin:0 0;">Off</div>
<div class="a" style="left:43px;top:735px;width:37px;height:24px;background:#e1e1e1;border:1px solid #adadad"></div>
<div class="t" style="left:51.25px;top:740.10px;font:normal 12px/14.40px 'Liberation Sans',sans-serif;color:#000;transform:scaleX(0.9170);transform-origin:0 0;">Fast</div>
<div class="a" style="left:82px;top:735px;width:37px;height:24px;background:#e1e1e1;border:1px solid #adadad"></div>
<div class="t" style="left:91.05px;top:740.10px;font:normal 12px/14.40px 'Liberation Sans',sans-serif;color:#000;transform:scaleX(0.8568);transform-origin:0 0;">Med</div>
<div class="a" style="left:121px;top:735px;width:38px;height:24px;background:#cce4f7;border:1px solid #0a5ab0"></div>
<div class="t" style="left:129.25px;top:740.10px;font:normal 12px/14.40px 'Liberation Sans',sans-serif;color:#000;transform:scaleX(0.8305);transform-origin:0 0;">Slow</div>
<svg class="a" style="left:0px;top:0px;" width="270" height="1048" viewBox="0 0 270 1048"><path d="M188 753 q0-8-10-8 v-4 l-6.5 5.5 6.5 5.5 v-4 q7 0 10 5z" fill="#000"/><rect x="202.5" y="743.5" width="15" height="8" rx="1" fill="#dfe8f2" stroke="#8aa0b8" stroke-width="0.9"/><circle cx="207" cy="743" r="1.6" fill="#cfe0ef" stroke="#8aa0b8" stroke-width="0.6"/><circle cx="211" cy="751.5" r="1.6" fill="#cfe0ef" stroke="#8aa0b8" stroke-width="0.6"/><path d="M233 739 v15.5 h15 M234 753 l3-4 2 2 3-5 1 3 3-5.5" fill="none" stroke="#222" stroke-width="1"/></svg>
<div class="a" style="left:2px;top:772px;width:262px;height:90px;background:linear-gradient(90deg,#fafafa,#dedede)"></div>
<div class="t" style="left:3.50px;top:776.80px;font:bold 12px/14.40px 'Liberation Sans',sans-serif;color:#1a72d8;transform:scaleX(0.8867);transform-origin:0 0;">CW: Off</div>
<svg class="a" style="left:0px;top:0px;" width="270" height="1048" viewBox="0 0 270 1048"><path d="M251.7 779.5 h5.4 l-2.7 3z" fill="#000"/></svg>
<div class="t" style="left:3.50px;top:794.80px;font:bold 12px/14.40px 'Liberation Sans',sans-serif;color:#1a72d8;transform:scaleX(0.8960);transform-origin:0 0;">Noise Blanker: Off</div>
<svg class="a" style="left:0px;top:0px;" width="270" height="1048" viewBox="0 0 270 1048"><path d="M251.7 797.5 h5.4 l-2.7 3z" fill="#000"/></svg>
<div class="t" style="left:3.50px;top:812.80px;font:bold 12px/14.40px 'Liberation Sans',sans-serif;color:#1a72d8;transform:scaleX(0.9017);transform-origin:0 0;">Noise Reduction: Off</div>
<svg class="a" style="left:0px;top:0px;" width="270" height="1048" viewBox="0 0 270 1048"><path d="M251.7 815.5 h5.4 l-2.7 3z" fill="#000"/></svg>
<div class="t" style="left:3.50px;top:830.80px;font:bold 12px/14.40px 'Liberation Sans',sans-serif;color:#1a72d8;transform:scaleX(0.9121);transform-origin:0 0;">Notch: Off</div>
<svg class="a" style="left:0px;top:0px;" width="270" height="1048" viewBox="0 0 270 1048"><path d="M251.7 833.5 h5.4 l-2.7 3z" fill="#000"/></svg>
<div class="t" style="left:3.50px;top:848.80px;font:bold 12px/14.40px 'Liberation Sans',sans-serif;color:#1a72d8;transform:scaleX(0.8818);transform-origin:0 0;">Squelch: Off</div>
<svg class="a" style="left:0px;top:0px;" width="270" height="1048" viewBox="0 0 270 1048"><path d="M251.7 851.5 h5.4 l-2.7 3z" fill="#000"/></svg>
<div class="a" style="left:268px;top:146px;width:1612px;height:547px;background:#000"></div>
<div class="a" style="left:268px;top:146px;width:1612px;height:526px;background:linear-gradient(#000 0%,#0b0b0b 25%,#131313 55%,#1b1b1b 100%)"></div>
<div class="a" style="left:268px;top:146px;width:1px;height:526px;background:linear-gradient(#222,#777)"></div>
<svg class="a" style="left:0px;top:0px;" width="1920" height="1048" viewBox="0 0 1920 1048"><path d="M321 170.5 H1826" stroke="#5c5c5c" stroke-width="1" stroke-dasharray="1 3"/><path d="M321 198.5 H1826" stroke="#5c5c5c" stroke-width="1" stroke-dasharray="1 3"/><path d="M321 227.5 H1826" stroke="#5c5c5c" stroke-width="1" stroke-dasharray="1 3"/><path d="M321 255.5 H1826" stroke="#5c5c5c" stroke-width="1" stroke-dasharray="1 3"/><path d="M321 284.5 H1826" stroke="#5c5c5c" stroke-width="1" stroke-dasharray="1 3"/><path d="M321 312.5 H1826" stroke="#5c5c5c" stroke-width="1" stroke-dasharray="1 3"/><path d="M321 340.5 H1826" stroke="#5c5c5c" stroke-width="1" stroke-dasharray="1 3"/><path d="M321 369.5 H1826" stroke="#5c5c5c" stroke-width="1" stroke-dasharray="1 3"/><path d="M321 397.5 H1826" stroke="#5c5c5c" stroke-width="1" stroke-dasharray="1 3"/><path d="M321 426.5 H1826" stroke="#5c5c5c" stroke-width="1" stroke-dasharray="1 3"/><path d="M321 454.5 H1826" stroke="#5c5c5c" stroke-width="1" stroke-dasharray="1 3"/><path d="M321 483.5 H1826" stroke="#5c5c5c" stroke-width="1" stroke-dasharray="1 3"/><path d="M321 511.5 H1826" stroke="#5c5c5c" stroke-width="1" stroke-dasharray="1 3"/><path d="M321 539.5 H1826" stroke="#5c5c5c" stroke-width="1" stroke-dasharray="1 3"/><path d="M321 568.5 H1826" stroke="#5c5c5c" stroke-width="1" stroke-dasharray="1 3"/><path d="M321 596.5 H1826" stroke="#5c5c5c" stroke-width="1" stroke-dasharray="1 3"/><path d="M321 625.5 H1826" stroke="#5c5c5c" stroke-width="1" stroke-dasharray="1 3"/><path d="M321 653.5 H1826" stroke="#5c5c5c" stroke-width="1" stroke-dasharray="1 3"/></svg>
<div class="t" style="left:272.50px;top:137.50px;font:normal 11px/13.20px 'Liberation Sans',sans-serif;color:#e6e6e6;transform:scaleX(0.8900);transform-origin:0 0;clip-path:inset(10px 0 0 0)">0 dBm</div>
<div class="t" style="left:1847.71px;top:137.50px;font:normal 11px/13.20px 'Liberation Sans',sans-serif;color:#e6e6e6;transform:scaleX(0.8900);transform-origin:0 0;clip-path:inset(10px 0 0 0)">0 dBm</div>
<div class="t" style="left:272.50px;top:165.10px;font:normal 11px/13.20px 'Liberation Sans',sans-serif;color:#e6e6e6;transform:scaleX(0.8900);transform-origin:0 0;">-10 dBm</div>
<div class="t" style="left:1839.00px;top:165.10px;font:normal 11px/13.20px 'Liberation Sans',sans-serif;color:#e6e6e6;transform:scaleX(0.8900);transform-origin:0 0;">-10 dBm</div>
<div class="t" style="left:272.50px;top:193.51px;font:normal 11px/13.20px 'Liberation Sans',sans-serif;color:#e6e6e6;transform:scaleX(0.8900);transform-origin:0 0;">-15 dBm</div>
<div class="t" style="left:1839.00px;top:193.51px;font:normal 11px/13.20px 'Liberation Sans',sans-serif;color:#e6e6e6;transform:scaleX(0.8900);transform-origin:0 0;">-15 dBm</div>
<div class="t" style="left:272.50px;top:221.92px;font:normal 11px/13.20px 'Liberation Sans',sans-serif;color:#e6e6e6;transform:scaleX(0.8900);transform-origin:0 0;">-20 dBm</div>
<div class="t" style="left:1839.00px;top:221.92px;font:normal 11px/13.20px 'Liberation Sans',sans-serif;color:#e6e6e6;transform:scaleX(0.8900);transform-origin:0 0;">-20 dBm</div>
<div class="t" style="left:272.50px;top:250.34px;font:normal 11px/13.20px 'Liberation Sans',sans-serif;color:#e6e6e6;transform:scaleX(0.8900);transform-origin:0 0;">-25 dBm</div>
<div class="t" style="left:1839.00px;top:250.34px;font:normal 11px/13.20px 'Liberation Sans',sans-serif;color:#e6e6e6;transform:scaleX(0.8900);transform-origin:0 0;">-25 dBm</div>
<div class="t" style="left:272.50px;top:278.75px;font:normal 11px/13.20px 'Liberation Sans',sans-serif;color:#e6e6e6;transform:scaleX(0.8900);transform-origin:0 0;">-30 dBm</div>
<div class="t" style="left:1839.00px;top:278.75px;font:normal 11px/13.20px 'Liberation Sans',sans-serif;color:#e6e6e6;transform:scaleX(0.8900);transform-origin:0 0;">-30 dBm</div>
<div class="t" style="left:272.50px;top:307.16px;font:normal 11px/13.20px 'Liberation Sans',sans-serif;color:#e6e6e6;transform:scaleX(0.8900);transform-origin:0 0;">-35 dBm</div>
<div class="t" style="left:1839.00px;top:307.16px;font:normal 11px/13.20px 'Liberation Sans',sans-serif;color:#e6e6e6;transform:scaleX(0.8900);transform-origin:0 0;">-35 dBm</div>
<div class="t" style="left:272.50px;top:335.57px;font:normal 11px/13.20px 'Liberation Sans',sans-serif;color:#e6e6e6;transform:scaleX(0.8900);transform-origin:0 0;">-40 dBm</div>
<div class="t" style="left:1839.00px;top:335.57px;font:normal 11px/13.20px 'Liberation Sans',sans-serif;color:#e6e6e6;transform:scaleX(0.8900);transform-origin:0 0;">-40 dBm</div>
<div class="t" style="left:272.50px;top:363.98px;font:normal 11px/13.20px 'Liberation Sans',sans-serif;color:#e6e6e6;transform:scaleX(0.8900);transform-origin:0 0;">-45 dBm</div>
<div class="t" style="left:1839.00px;top:363.98px;font:normal 11px/13.20px 'Liberation Sans',sans-serif;color:#e6e6e6;transform:scaleX(0.8900);transform-origin:0 0;">-45 dBm</div>
<div class="t" style="left:272.50px;top:392.39px;font:normal 11px/13.20px 'Liberation Sans',sans-serif;color:#e6e6e6;transform:scaleX(0.8900);transform-origin:0 0;">-50 dBm</div>
<div class="t" style="left:1839.00px;top:392.39px;font:normal 11px/13.20px 'Liberation Sans',sans-serif;color:#e6e6e6;transform:scaleX(0.8900);transform-origin:0 0;">-50 dBm</div>
<div class="t" style="left:272.50px;top:420.81px;font:normal 11px/13.20px 'Liberation Sans',sans-serif;color:#e6e6e6;transform:scaleX(0.8900);transform-origin:0 0;">-55 dBm</div>
<div class="t" style="left:1839.00px;top:420.81px;font:normal 11px/13.20px 'Liberation Sans',sans-serif;color:#e6e6e6;transform:scaleX(0.8900);transform-origin:0 0;">-55 dBm</div>
<div class="t" style="left:272.50px;top:449.22px;font:normal 11px/13.20px 'Liberation Sans',sans-serif;color:#e6e6e6;transform:scaleX(0.8900);transform-origin:0 0;">-60 dBm</div>
<div class="t" style="left:1839.00px;top:449.22px;font:normal 11px/13.20px 'Liberation Sans',sans-serif;color:#e6e6e6;transform:scaleX(0.8900);transform-origin:0 0;">-60 dBm</div>
<div class="t" style="left:272.50px;top:477.63px;font:normal 11px/13.20px 'Liberation Sans',sans-serif;color:#e6e6e6;transform:scaleX(0.8900);transform-origin:0 0;">-65 dBm</div>
<div class="t" style="left:1839.00px;top:477.63px;font:normal 11px/13.20px 'Liberation Sans',sans-serif;color:#e6e6e6;transform:scaleX(0.8900);transform-origin:0 0;">-65 dBm</div>
<div class="t" style="left:272.50px;top:506.04px;font:normal 11px/13.20px 'Liberation Sans',sans-serif;color:#e6e6e6;transform:scaleX(0.8900);transform-origin:0 0;">-70 dBm</div>
<div class="t" style="left:1839.00px;top:506.04px;font:normal 11px/13.20px 'Liberation Sans',sans-serif;color:#e6e6e6;transform:scaleX(0.8900);transform-origin:0 0;">-70 dBm</div>
<div class="t" style="left:272.50px;top:534.45px;font:normal 11px/13.20px 'Liberation Sans',sans-serif;color:#e6e6e6;transform:scaleX(0.8900);transform-origin:0 0;">-75 dBm</div>
<div class="t" style="left:1839.00px;top:534.45px;font:normal 11px/13.20px 'Liberation Sans',sans-serif;color:#e6e6e6;transform:scaleX(0.8900);transform-origin:0 0;">-75 dBm</div>
<div class="t" style="left:272.50px;top:562.86px;font:normal 11px/13.20px 'Liberation Sans',sans-serif;color:#e6e6e6;transform:scaleX(0.8900);transform-origin:0 0;">-80 dBm</div>
<div class="t" style="left:1839.00px;top:562.86px;font:normal 11px/13.20px 'Liberation Sans',sans-serif;color:#e6e6e6;transform:scaleX(0.8900);transform-origin:0 0;">-80 dBm</div>
<div class="t" style="left:272.50px;top:591.28px;font:normal 11px/13.20px 'Liberation Sans',sans-serif;color:#e6e6e6;transform:scaleX(0.8900);transform-origin:0 0;">-85 dBm</div>
<div class="t" style="left:1839.00px;top:591.28px;font:normal 11px/13.20px 'Liberation Sans',sans-serif;color:#e6e6e6;transform:scaleX(0.8900);transform-origin:0 0;">-85 dBm</div>
<div class="t" style="left:272.50px;top:619.69px;font:normal 11px/13.20px 'Liberation Sans',sans-serif;color:#e6e6e6;transform:scaleX(0.8900);transform-origin:0 0;">-90 dBm</div>
<div class="t" style="left:1839.00px;top:619.69px;font:normal 11px/13.20px 'Liberation Sans',sans-serif;color:#e6e6e6;transform:scaleX(0.8900);transform-origin:0 0;">-90 dBm</div>
<div class="t" style="left:272.50px;top:648.10px;font:normal 11px/13.20px 'Liberation Sans',sans-serif;color:#e6e6e6;transform:scaleX(0.8900);transform-origin:0 0;">-95 dBm</div>
<div class="t" style="left:1839.00px;top:648.10px;font:normal 11px/13.20px 'Liberation Sans',sans-serif;color:#e6e6e6;transform:scaleX(0.8900);transform-origin:0 0;">-95 dBm</div>
<svg class="a" style="left:0px;top:0px;" width="1920" height="1048" viewBox="0 0 1920 1048"><polyline fill="none" stroke="#d6d6d6" stroke-width="1.35" stroke-linejoin="bevel" points="268,635 270.5,629 272,648 273.5,649 276,610 277.5,642 279,621 280.5,642 282.5,625 284,642 286,616 288,633 290.5,629 292.5,618 294,647 296.5,625 299,651 300.5,619 302.5,653 304,618 306,642 307.5,623 309.5,633 311.5,614 314,643 316.5,644 319,620 320.5,642 322.5,615 325,634 327,612 328.5,645 331,632 333.5,648 335,615 336.5,642 338,617 340.5,641 342.5,636 345,615 346.5,637 349,645 350.5,641 352,618 354.5,636 356,608 358.5,635 360.5,610 362,643 363.5,628 365.5,634 367.5,647 370,623 371.5,620 374,643 376.5,622 378,637 379.5,621 382,634 383.5,619 386,642 388,617 390.5,632 393,638 394.5,639 397,611 399,646 401,616 403.5,643 405,624 406.5,646 408.5,635 410,625 412,612 413.5,633 416,623 418.5,630 420,612 422,635 424,622 426.5,606 428.5,641 430,609 432.5,635 434,632 435.5,614 438,621 440,628 442,636 443.5,617 445,633 447,616 448.5,639 451,614 453,633 455.5,612 457,613 458.5,613 461,650 463,643 465.5,620 468,640 470,618 471.5,633 473,637 475.5,623 478,641 480.5,621 482.5,651 484,605 486,607 487.5,612 489,615 491,634 492.5,610 494.5,631 496.5,607 499,630 501.5,630 503.5,630 505,641 507,643 509.5,651 511,593 513,630 515.5,620 517.5,640 520,631 521.5,611 523.5,626 526,638 528,613 529.5,610 531,615 533,648 535,588 537.5,610 539,645 541,613 542.5,632 545,605 546.5,612 548.5,638 550,628 552.5,630 555,627 556.5,632 558.5,619 560,628 562,618 564,612 565.5,600 568,631 570,637 571.5,608 574,626 575.5,614 578,600 580,618 582,622 584,615 586,624 588.5,610 590.5,634 593,608 594.5,600 596.5,636 598.5,616 600,605 602.5,618 604,605 606,637 607.5,613 609,626 611.5,605 613.5,626 615,610 616.5,628 618,596 620,596 621.5,630 624,600 625.5,614 627.5,619 630,591 631.5,636 633.5,612 635,627 637.5,625 639.5,603 642,612 643.5,625 645.5,634 647.5,618 649,605 651,626 652.5,595 655,630 656.5,605 658,626 660.5,609 662,612 664,617 666,600 668,635 669.5,605 671.5,601 673.5,632 675.5,639 677,607 678.5,620 680,626 682.5,623 684.5,608 686.5,620 688.5,610 690,594 692,627 693.5,605 695.5,619 697,599 699.5,616 702,595 704,620 705.5,627 707.5,605 710,611 711.5,589 714,613 715.5,612 718,602 719.5,609 721,588 722.5,608 725,600 727.5,611 729,598 731.5,622 733.5,593 735,612 737.5,621 739,617 741.5,598 743.5,609 746,589 748.5,620 751,590 753.5,625 755.5,631 757,579 759.5,616 761.5,611 764,607 765.5,602 767.5,606 769.5,588 771.5,609 773,596 774.5,610 776.5,579 778,619 780.5,582 782.5,608 785,586 787,618 789,593 791,618 793.5,587 795.5,612 797.5,594 799,606 801,594 802.5,618 804,589 805.5,603 807,585 809.5,612 811,592 813.5,599 815,586 817.5,611 820,586 822,602 823.5,612 825.5,583 828,610 830,623 832.5,584 835,601 837,584 839.5,598 842,583 843.5,599 846,586 848.5,580 850,598 852,583 854.5,607 856.5,580 858,597 859.5,585 862,598 864.5,572 866,610 868,558 870,602 872,580 873.5,580 876,606 878.5,589 880,591 881.5,581 883,616 885.5,575 888,589 890.5,585 892,575 894.5,603 897,576 899,596 901,593 902.5,572 904.5,606 907,555 908.5,595 911,564 913.5,602 916,561 917.5,596 919.5,586 921.5,576 923.5,546 925.5,581 928,557 930.5,587 932,559 933.5,573 936,563 938.5,604 940.5,563 942,569 943.5,577 945.5,581 947.5,555 950,576 952,588 953.5,558 956,578 958.5,579 961,550 963,570 964.5,567 966,571 968,551 969.5,548 971,572 972.5,528 974,550 976,548 977.5,568 980,536 981.5,570 983.5,520 985.5,537 987,568 989,561 990.5,545 992,562 993.5,540 996,531 997.5,567 1000,511 1002.5,563 1004,523 1005.5,526 1007.5,537 1009,528 1010.5,536 1012.5,517 1014,538 1016.5,520 1018.5,535 1020.5,517 1022,527 1023.5,502 1025,551 1027,543 1029,509 1030.5,497 1032,528 1034,511 1035.5,531 1038,508 1040,513 1041.5,482 1044,524 1046.5,472 1049,505 1050.5,488 1052.5,512 1054.5,485 1056.5,482 1059,503 1061.5,477 1063,481 1065.5,481 1068,440 1070,455 1073,426 1076,370 1078,321 1081,296 1083,367 1086,403 1089,431 1091,420 1093,399 1094,355 1096,395 1097,406 1098,376 1101,392 1103,387 1106,440 1108,468 1111,449 1114,472 1116,440 1118,408 1120,415 1122,429 1125,468 1127,445 1129,431 1131,455 1133,472 1136,436 1138,460 1140,454 1143,480 1145,486 1147,479 1149,520 1151,505 1153,535 1155,500 1157.5,545 1160,559 1162.5,528 1165,562 1167,552 1169.5,536 1171,539 1173,566 1174.5,536 1176.5,540 1178,535 1180.5,565 1183,540 1184.5,556 1186.5,551 1189,555 1190.5,542 1193,566 1195,537 1196.5,548 1199,567 1201,567 1203,556 1205,546 1207.5,573 1209,552 1211.5,578 1214,548 1216.5,575 1219,551 1221,576 1223,549 1225.5,574 1227.5,570 1229.5,594 1232,554 1233.5,566 1236,553 1238.5,581 1241,565 1242.5,577 1244,589 1246.5,554 1248,573 1250.5,576 1253,555 1255.5,580 1258,561 1259.5,598 1261.5,556 1264,588 1265.5,564 1268,575 1270,560 1272,571 1274.5,583 1276.5,562 1278,587 1280.5,561 1282.5,568 1284,572 1286,605 1287.5,569 1290,585 1292.5,575 1294,587 1296,567 1297.5,585 1299.5,568 1302,590 1304,570 1306.5,601 1309,589 1310.5,592 1312.5,584 1315,584 1317.5,565 1319.5,572 1321.5,578 1324,567 1326.5,602 1329,572 1331.5,588 1333,562 1335,593 1336.5,575 1338.5,601 1341,579 1342.5,618 1344.5,600 1347,576 1349,597 1351.5,579 1354,604 1355.5,611 1357,575 1358.5,608 1361,580 1363.5,602 1365,574 1366.5,605 1369,578 1371.5,599 1373.5,585 1375,587 1376.5,596 1379,586 1381,612 1383,580 1385.5,569 1387.5,610 1390,595 1392,605 1393.5,586 1395,602 1397,617 1398.5,581 1400,601 1401.5,583 1403,617 1405,593 1406.5,592 1408,588 1410.5,601 1413,586 1415.5,600 1418,607 1420.5,601 1422,608 1424.5,595 1427,609 1428.5,609 1430,600 1432,621 1433.5,589 1436,615 1438.5,594 1440,617 1441.5,623 1443.5,612 1446,635 1448,590 1450,608 1452.5,618 1454.5,588 1456.5,633 1458,594 1460,624 1462,599 1463.5,610 1465,619 1467.5,622 1469.5,604 1471.5,617 1473,604 1475,625 1476.5,608 1478,620 1480,604 1482.5,612 1484.5,623 1486,598 1488,624 1490.5,596 1492.5,624 1494,610 1496,606 1497.5,616 1499.5,607 1501.5,626 1503.5,628 1505,595 1507.5,610 1509.5,629 1511,598 1513,595 1514.5,628 1517,611 1518.5,596 1520.5,630 1522,630 1524.5,603 1526,635 1528.5,604 1531,609 1532.5,627 1534.5,623 1536.5,613 1538.5,612 1540,600 1541.5,621 1544,633 1546.5,614 1548.5,631 1550,634 1552,614 1554.5,602 1556.5,620 1558.5,614 1560,629 1561.5,629 1563,614 1565.5,621 1567,605 1569,606 1570.5,597 1572,625 1574.5,607 1576,631 1578.5,588 1580,620 1581.5,613 1583,630 1584.5,606 1587,628 1589,607 1590.5,631 1593,604 1594.5,625 1597,619 1599.5,636 1601,606 1603.5,631 1605.5,598 1608,613 1610.5,585 1613,631 1614.5,606 1617,614 1618.5,604 1620.5,623 1623,606 1625,616 1626.5,633 1629,600 1631.5,620 1634,627 1635.5,610 1638,636 1640,603 1642.5,637 1644.5,598 1647,640 1649,615 1650.5,608 1652,626 1654.5,619 1656,612 1658,591 1659.5,638 1662,616 1663.5,625 1665,606 1666.5,596 1669,641 1670.5,611 1672.5,626 1674.5,604 1676.5,607 1679,640 1680.5,620 1683,607 1685,621 1686.5,641 1688.5,627 1690,644 1692.5,617 1695,642 1697.5,602 1699.5,624 1701.5,626 1703.5,618 1706,638 1707.5,625 1709,630 1711.5,624 1714,631 1715.5,612 1717.5,630 1719,639 1720.5,622 1722,614 1723.5,637 1725.5,620 1727,653 1729.5,622 1731,634 1733.5,609 1735.5,635 1737.5,641 1739.5,615 1742,628 1744.5,620 1747,612 1749.5,619 1751,617 1752.5,651 1755,614 1756.5,607 1758.5,638 1760,638 1761.5,625 1763,628 1764.5,649 1766.5,614 1769,630 1771,621 1773,629 1775.5,623 1777.5,647 1780,605 1782,619 1784.5,635 1787,629 1789,658 1791,646 1793,601 1795.5,633 1797.5,616 1799.5,638 1801,613 1803,634 1805.5,618 1808,646 1810,637 1812,643 1814.5,620 1816.5,640 1818.5,625 1821,643 1823.5,610 1826,637 1828.5,614 1830.5,636 1832.5,629 1834,638 1836.5,638 1839,628 1841,620 1843.5,644 1846,623 1848,647 1849.5,648 1851.5,624 1853,651 1854.5,617 1856.5,623 1858.5,644 1861,617 1863,644 1864.5,614 1867,629 1869.5,617 1872,618 1873.5,644 1875.5,618 1878,647 1880,621 1877,668"/></svg>
<svg class="a" style="left:0px;top:0px;" width="1920" height="1048" viewBox="0 0 1920 1048"><defs><linearGradient id="fbg" x1="0" y1="0" x2="0" y2="1"><stop offset="0" stop-color="#0cf00c" stop-opacity="0.45"/><stop offset="0.35" stop-color="#18d018" stop-opacity="0.35"/><stop offset="0.7" stop-color="#60a060" stop-opacity="0.17"/><stop offset="1" stop-color="#a0a0a0" stop-opacity="0.1"/></linearGradient><linearGradient id="fbt" x1="0" y1="0" x2="0" y2="1"><stop offset="0" stop-color="#5cf05c"/><stop offset="1" stop-color="#20b020"/></linearGradient><linearGradient id="fbb" x1="0" y1="0" x2="1" y2="0"><stop offset="0" stop-color="#1a9a1a"/><stop offset="0.5" stop-color="#8ad08a"/><stop offset="1" stop-color="#1a9a1a"/></linearGradient></defs><rect x="1072" y="154" width="51" height="510" fill="url(#fbg)"/><rect x="1072" y="148" width="51" height="6" fill="url(#fbt)"/><rect x="1072" y="664" width="51" height="7" fill="url(#fbb)"/><path d="M1072.5 148 V671 M1122.5 148 V671" stroke="#3cc03c" stroke-width="1"/><path d="M1073 184.5 H1122" stroke="#2a9a2a" stroke-width="1.2"/><rect x="1089.3" y="157" width="15.7" height="15.8" rx="2" fill="#033a03" fill-opacity="0.85"/></svg>
<div class="t" style="left:1094.45px;top:158.40px;font:normal 11px/13.20px 'Liberation Sans',sans-serif;color:#fff;transform:scaleX(0.9000);transform-origin:0 0;">1</div>
<svg class="a" style="left:0px;top:0px;" width="1920" height="1048" viewBox="0 0 1920 1048"><rect x="322" y="147" width="296" height="31" fill="#030303"/><defs><linearGradient id="mg" x1="0" x2="1"><stop offset="0" stop-color="#2e2e2e"/><stop offset="0.28" stop-color="#8a8a30"/><stop offset="0.55" stop-color="#ffff10"/><stop offset="0.68" stop-color="#ffb010"/><stop offset="0.82" stop-color="#ff2a10"/><stop offset="1" stop-color="#ff0000"/></linearGradient></defs><rect x="411" y="151.5" width="146" height="7.3" fill="url(#mg)"/><circle cx="564.8" cy="155" r="3.3" fill="#f0f020"/><path d="M411 164.5 H611" stroke="#e03030" stroke-width="1.2"/><path d="M439.2 163 v2" stroke="#e03030" stroke-width="1"/><path d="M468.3 163 v2" stroke="#e03030" stroke-width="1"/><path d="M496.5 163 v2" stroke="#e03030" stroke-width="1"/><path d="M525.2 163 v2" stroke="#e03030" stroke-width="1"/><path d="M553.3 163 v2" stroke="#e03030" stroke-width="1"/><path d="M582.5 163 v2" stroke="#e03030" stroke-width="1"/></svg>
<div class="t" style="left:342.30px;top:153.20px;font:normal 18px/21.60px 'Liberation Mono',monospace;color:#fff;transform:scaleX(0.9968);transform-origin:0 0;">-32</div>
<div class="t" style="left:382.50px;top:158.80px;font:normal 12px/14.40px 'Liberation Mono',monospace;color:#fff;transform:scaleX(0.9628);transform-origin:0 0;">dBm</div>
<div class="t" style="left:430.02px;top:166.50px;font:normal 9px/10.80px 'Liberation Mono',monospace;color:#e8e8e8;transform:scaleX(0.8500);transform-origin:0 0;">-120</div>
<div class="t" style="left:459.12px;top:166.50px;font:normal 9px/10.80px 'Liberation Mono',monospace;color:#e8e8e8;transform:scaleX(0.8500);transform-origin:0 0;">-100</div>
<div class="t" style="left:489.61px;top:166.50px;font:normal 9px/10.80px 'Liberation Mono',monospace;color:#e8e8e8;transform:scaleX(0.8500);transform-origin:0 0;">-80</div>
<div class="t" style="left:518.31px;top:166.50px;font:normal 9px/10.80px 'Liberation Mono',monospace;color:#e8e8e8;transform:scaleX(0.8500);transform-origin:0 0;">-60</div>
<div class="t" style="left:546.41px;top:166.50px;font:normal 9px/10.80px 'Liberation Mono',monospace;color:#e8e8e8;transform:scaleX(0.8500);transform-origin:0 0;">-40</div>
<div class="t" style="left:575.61px;top:166.50px;font:normal 9px/10.80px 'Liberation Mono',monospace;color:#e8e8e8;transform:scaleX(0.8500);transform-origin:0 0;">-20</div>
<div class="a" style="left:268px;top:672px;width:1612px;height:11px;background:linear-gradient(#747474,#5a5a5a 30%,#3a3a3a)"></div>
<div class="a" style="left:268px;top:683px;width:1612px;height:10px;background:#000"></div>
<svg class="a" style="left:0px;top:0px;" width="1920" height="1048" viewBox="0 0 1920 1048"><rect x="270.4" y="672.5" width="2" height="3.5" fill="#8e8e8e"/><rect x="283.0" y="672.5" width="2" height="2.5" fill="#8e8e8e"/><rect x="295.5" y="672.5" width="2" height="3.5" fill="#8e8e8e"/><rect x="308.1" y="672.5" width="2" height="2.5" fill="#8e8e8e"/><rect x="320.6" y="672.5" width="2" height="5" fill="#8e8e8e"/><rect x="333.1" y="672.5" width="2" height="2.5" fill="#8e8e8e"/><rect x="345.7" y="672.5" width="2" height="3.5" fill="#8e8e8e"/><rect x="358.2" y="672.5" width="2" height="2.5" fill="#8e8e8e"/><rect x="370.8" y="672.5" width="2" height="3.5" fill="#8e8e8e"/><rect x="383.3" y="672.5" width="2" height="2.5" fill="#8e8e8e"/><rect x="395.8" y="672.5" width="2" height="3.5" fill="#8e8e8e"/><rect x="408.4" y="672.5" width="2" height="2.5" fill="#8e8e8e"/><rect x="420.9" y="672.5" width="2" height="3.5" fill="#8e8e8e"/><rect x="433.5" y="672.5" width="2" height="2.5" fill="#8e8e8e"/><rect x="446.0" y="672.5" width="2" height="5" fill="#8e8e8e"/><rect x="458.5" y="672.5" width="2" height="2.5" fill="#8e8e8e"/><rect x="471.1" y="672.5" width="2" height="3.5" fill="#8e8e8e"/><rect x="483.6" y="672.5" width="2" height="2.5" fill="#8e8e8e"/><rect x="496.2" y="672.5" width="2" height="3.5" fill="#8e8e8e"/><rect x="508.7" y="672.5" width="2" height="2.5" fill="#8e8e8e"/><rect x="521.2" y="672.5" width="2" height="3.5" fill="#8e8e8e"/><rect x="533.8" y="672.5" width="2" height="2.5" fill="#8e8e8e"/><rect x="546.3" y="672.5" width="2" height="3.5" fill="#8e8e8e"/><rect x="558.9" y="672.5" width="2" height="2.5" fill="#8e8e8e"/><rect x="571.4" y="672.5" width="2" height="5" fill="#8e8e8e"/><rect x="583.9" y="672.5" width="2" height="2.5" fill="#8e8e8e"/><rect x="596.5" y="672.5" width="2" height="3.5" fill="#8e8e8e"/><rect x="609.0" y="672.5" width="2" height="2.5" fill="#8e8e8e"/><rect x="621.6" y="672.5" width="2" height="3.5" fill="#8e8e8e"/><rect x="634.1" y="672.5" width="2" height="2.5" fill="#8e8e8e"/><rect x="646.6" y="672.5" width="2" height="3.5" fill="#8e8e8e"/><rect x="659.2" y="672.5" width="2" height="2.5" fill="#8e8e8e"/><rect x="671.7" y="672.5" width="2" height="3.5" fill="#8e8e8e"/><rect x="684.3" y="672.5" width="2" height="2.5" fill="#8e8e8e"/><rect x="696.8" y="672.5" width="2" height="5" fill="#8e8e8e"/><rect x="709.3" y="672.5" width="2" height="2.5" fill="#8e8e8e"/><rect x="721.9" y="672.5" width="2" height="3.5" fill="#8e8e8e"/><rect x="734.4" y="672.5" width="2" height="2.5" fill="#8e8e8e"/><rect x="747.0" y="672.5" width="2" height="3.5" fill="#8e8e8e"/><rect x="759.5" y="672.5" width="2" height="2.5" fill="#8e8e8e"/><rect x="772.0" y="672.5" width="2" height="3.5" fill="#8e8e8e"/><rect x="784.6" y="672.5" width="2" height="2.5" fill="#8e8e8e"/><rect x="797.1" y="672.5" width="2" height="3.5" fill="#8e8e8e"/><rect x="809.7" y="672.5" width="2" height="2.5" fill="#8e8e8e"/><rect x="822.2" y="672.5" width="2" height="5" fill="#8e8e8e"/><rect x="834.7" y="672.5" width="2" height="2.5" fill="#8e8e8e"/><rect x="847.3" y="672.5" width="2" height="3.5" fill="#8e8e8e"/><rect x="859.8" y="672.5" width="2" height="2.5" fill="#8e8e8e"/><rect x="872.4" y="672.5" width="2" height="3.5" fill="#8e8e8e"/><rect x="884.9" y="672.5" width="2" height="2.5" fill="#8e8e8e"/><rect x="897.4" y="672.5" width="2" height="3.5" fill="#8e8e8e"/><rect x="910.0" y="672.5" width="2" height="2.5" fill="#8e8e8e"/><rect x="922.5" y="672.5" width="2" height="3.5" fill="#8e8e8e"/><rect x="935.1" y="672.5" width="2" height="2.5" fill="#8e8e8e"/><rect x="947.6" y="672.5" width="2" height="5" fill="#8e8e8e"/><rect x="960.1" y="672.5" width="2" height="2.5" fill="#8e8e8e"/><rect x="972.7" y="672.5" width="2" height="3.5" fill="#8e8e8e"/><rect x="985.2" y="672.5" width="2" height="2.5" fill="#8e8e8e"/><rect x="997.8" y="672.5" width="2" height="3.5" fill="#8e8e8e"/><rect x="1010.3" y="672.5" width="2" height="2.5" fill="#8e8e8e"/><rect x="1022.8" y="672.5" width="2" height="3.5" fill="#8e8e8e"/><rect x="1035.4" y="672.5" width="2" height="2.5" fill="#8e8e8e"/><rect x="1047.9" y="672.5" width="2" height="3.5" fill="#8e8e8e"/><rect x="1060.5" y="672.5" width="2" height="2.5" fill="#8e8e8e"/><rect x="1073.0" y="672.5" width="2" height="5" fill="#8e8e8e"/><rect x="1085.5" y="672.5" width="2" height="2.5" fill="#8e8e8e"/><rect x="1098.1" y="672.5" width="2" height="3.5" fill="#8e8e8e"/><rect x="1110.6" y="672.5" width="2" height="2.5" fill="#8e8e8e"/><rect x="1123.2" y="672.5" width="2" height="3.5" fill="#8e8e8e"/><rect x="1135.7" y="672.5" width="2" height="2.5" fill="#8e8e8e"/><rect x="1148.2" y="672.5" width="2" height="3.5" fill="#8e8e8e"/><rect x="1160.8" y="672.5" width="2" height="2.5" fill="#8e8e8e"/><rect x="1173.3" y="672.5" width="2" height="3.5" fill="#8e8e8e"/><rect x="1185.9" y="672.5" width="2" height="2.5" fill="#8e8e8e"/><rect x="1198.4" y="672.5" width="2" height="5" fill="#8e8e8e"/><rect x="1210.9" y="672.5" width="2" height="2.5" fill="#8e8e8e"/><rect x="1223.5" y="672.5" width="2" height="3.5" fill="#8e8e8e"/><rect x="1236.0" y="672.5" width="2" height="2.5" fill="#8e8e8e"/><rect x="1248.6" y="672.5" width="2" height="3.5" fill="#8e8e8e"/><rect x="1261.1" y="672.5" width="2" height="2.5" fill="#8e8e8e"/><rect x="1273.6" y="672.5" width="2" height="3.5" fill="#8e8e8e"/><rect x="1286.2" y="672.5" width="2" height="2.5" fill="#8e8e8e"/><rect x="1298.7" y="672.5" width="2" height="3.5" fill="#8e8e8e"/><rect x="1311.3" y="672.5" width="2" height="2.5" fill="#8e8e8e"/><rect x="1323.8" y="672.5" width="2" height="5" fill="#8e8e8e"/><rect x="1336.3" y="672.5" width="2" height="2.5" fill="#8e8e8e"/><rect x="1348.9" y="672.5" width="2" height="3.5" fill="#8e8e8e"/><rect x="1361.4" y="672.5" width="2" height="2.5" fill="#8e8e8e"/><rect x="1374.0" y="672.5" width="2" height="3.5" fill="#8e8e8e"/><rect x="1386.5" y="672.5" width="2" height="2.5" fill="#8e8e8e"/><rect x="1399.0" y="672.5" width="2" height="3.5" fill="#8e8e8e"/><rect x="1411.6" y="672.5" width="2" height="2.5" fill="#8e8e8e"/><rect x="1424.1" y="672.5" width="2" height="3.5" fill="#8e8e8e"/><rect x="1436.7" y="672.5" width="2" height="2.5" fill="#8e8e8e"/><rect x="1449.2" y="672.5" width="2" height="5" fill="#8e8e8e"/><rect x="1461.7" y="672.5" width="2" height="2.5" fill="#8e8e8e"/><rect x="1474.3" y="672.5" width="2" height="3.5" fill="#8e8e8e"/><rect x="1486.8" y="672.5" width="2" height="2.5" fill="#8e8e8e"/><rect x="1499.4" y="672.5" width="2" height="3.5" fill="#8e8e8e"/><rect x="1511.9" y="672.5" width="2" height="2.5" fill="#8e8e8e"/><rect x="1524.4" y="672.5" width="2" height="3.5" fill="#8e8e8e"/><rect x="1537.0" y="672.5" width="2" height="2.5" fill="#8e8e8e"/><rect x="1549.5" y="672.5" width="2" height="3.5" fill="#8e8e8e"/><rect x="1562.1" y="672.5" width="2" height="2.5" fill="#8e8e8e"/><rect x="1574.6" y="672.5" width="2" height="5" fill="#8e8e8e"/><rect x="1587.1" y="672.5" width="2" height="2.5" fill="#8e8e8e"/><rect x="1599.7" y="672.5" width="2" height="3.5" fill="#8e8e8e"/><rect x="1612.2" y="672.5" width="2" height="2.5" fill="#8e8e8e"/><rect x="1624.8" y="672.5" width="2" height="3.5" fill="#8e8e8e"/><rect x="1637.3" y="672.5" width="2" height="2.5" fill="#8e8e8e"/><rect x="1649.8" y="672.5" width="2" height="3.5" fill="#8e8e8e"/><rect x="1662.4" y="672.5" width="2" height="2.5" fill="#8e8e8e"/><rect x="1674.9" y="672.5" width="2" height="3.5" fill="#8e8e8e"/><rect x="1687.5" y="672.5" width="2" height="2.5" fill="#8e8e8e"/><rect x="1700.0" y="672.5" width="2" height="5" fill="#8e8e8e"/><rect x="1712.5" y="672.5" width="2" height="2.5" fill="#8e8e8e"/><rect x="1725.1" y="672.5" width="2" height="3.5" fill="#8e8e8e"/><rect x="1737.6" y="672.5" width="2" height="2.5" fill="#8e8e8e"/><rect x="1750.2" y="672.5" width="2" height="3.5" fill="#8e8e8e"/><rect x="1762.7" y="672.5" width="2" height="2.5" fill="#8e8e8e"/><rect x="1775.2" y="672.5" width="2" height="3.5" fill="#8e8e8e"/><rect x="1787.8" y="672.5" width="2" height="2.5" fill="#8e8e8e"/><rect x="1800.3" y="672.5" width="2" height="3.5" fill="#8e8e8e"/><rect x="1812.9" y="672.5" width="2" height="2.5" fill="#8e8e8e"/><rect x="1825.4" y="672.5" width="2" height="5" fill="#8e8e8e"/><rect x="1837.9" y="672.5" width="2" height="2.5" fill="#8e8e8e"/><rect x="1850.5" y="672.5" width="2" height="3.5" fill="#8e8e8e"/><rect x="1863.0" y="672.5" width="2" height="2.5" fill="#8e8e8e"/><rect x="1875.6" y="672.5" width="2" height="3.5" fill="#8e8e8e"/></svg>
<div class="t" style="left:303.71px;top:679.20px;font:normal 11px/13.20px 'Liberation Sans',sans-serif;color:#f2f2f2;transform:scaleX(0.9000);transform-origin:0 0;">433.940</div>
<div class="t" style="left:429.11px;top:679.20px;font:normal 11px/13.20px 'Liberation Sans',sans-serif;color:#f2f2f2;transform:scaleX(0.9000);transform-origin:0 0;">433.950</div>
<div class="t" style="left:554.51px;top:679.20px;font:normal 11px/13.20px 'Liberation Sans',sans-serif;color:#f2f2f2;transform:scaleX(0.9000);transform-origin:0 0;">433.960</div>
<div class="t" style="left:679.91px;top:679.20px;font:normal 11px/13.20px 'Liberation Sans',sans-serif;color:#f2f2f2;transform:scaleX(0.9000);transform-origin:0 0;">433.970</div>
<div class="t" style="left:805.31px;top:679.20px;font:normal 11px/13.20px 'Liberation Sans',sans-serif;color:#f2f2f2;transform:scaleX(0.9000);transform-origin:0 0;">433.980</div>
<div class="t" style="left:930.71px;top:679.20px;font:normal 11px/13.20px 'Liberation Sans',sans-serif;color:#f2f2f2;transform:scaleX(0.9000);transform-origin:0 0;">433.990</div>
<div class="t" style="left:1056.11px;top:679.20px;font:normal 11px/13.20px 'Liberation Sans',sans-serif;color:#f2f2f2;transform:scaleX(0.9000);transform-origin:0 0;">434.000</div>
<div class="t" style="left:1181.51px;top:679.20px;font:normal 11px/13.20px 'Liberation Sans',sans-serif;color:#f2f2f2;transform:scaleX(0.9000);transform-origin:0 0;">434.010</div>
<div class="t" style="left:1306.91px;top:679.20px;font:normal 11px/13.20px 'Liberation Sans',sans-serif;color:#f2f2f2;transform:scaleX(0.9000);transform-origin:0 0;">434.020</div>
<div class="t" style="left:1432.31px;top:679.20px;font:normal 11px/13.20px 'Liberation Sans',sans-serif;color:#f2f2f2;transform:scaleX(0.9000);transform-origin:0 0;">434.030</div>
<div class="t" style="left:1557.71px;top:679.20px;font:normal 11px/13.20px 'Liberation Sans',sans-serif;color:#f2f2f2;transform:scaleX(0.9000);transform-origin:0 0;">434.040</div>
<div class="t" style="left:1683.11px;top:679.20px;font:normal 11px/13.20px 'Liberation Sans',sans-serif;color:#f2f2f2;transform:scaleX(0.9000);transform-origin:0 0;">434.050</div>
<div class="t" style="left:1808.51px;top:679.20px;font:normal 11px/13.20px 'Liberation Sans',sans-serif;color:#f2f2f2;transform:scaleX(0.9000);transform-origin:0 0;">434.060</div>
<div class="a" style="left:268px;top:693px;width:1612px;height:6px;background:#f0f0f0;border-top:1px solid #fff;border-bottom:1px solid #fff"></div>
<svg class="a" style="left:0px;top:0px;" width="1920" height="1048" viewBox="0 0 1920 1048"><path d="M1044 696 H1106" stroke="#555" stroke-width="2" stroke-dasharray="1.6 1.6"/></svg>
<svg class="a" style="left:0px;top:0px;" width="1920" height="1048" viewBox="0 0 1920 1048"><defs><linearGradient id="gl" x1="0" x2="1"><stop offset="0.4479" stop-color="#6882f0" stop-opacity="0"/><stop offset="0.4789" stop-color="#6882f0" stop-opacity="0.35"/><stop offset="0.4988" stop-color="#6882f0" stop-opacity="0.6"/><stop offset="0.5304" stop-color="#6882f0" stop-opacity="0.55"/><stop offset="0.5471" stop-color="#6882f0" stop-opacity="0.3"/><stop offset="0.5782" stop-color="#6882f0" stop-opacity="0"/></linearGradient><linearGradient id="hzw" x1="0" x2="1"><stop offset="0.2680" stop-color="#6882f0" stop-opacity="0"/><stop offset="0.3610" stop-color="#6882f0" stop-opacity="0.15"/><stop offset="0.4541" stop-color="#6882f0" stop-opacity="0.3"/><stop offset="0.5471" stop-color="#6882f0" stop-opacity="0.3"/><stop offset="0.6712" stop-color="#6882f0" stop-opacity="0.28"/><stop offset="0.7519" stop-color="#6882f0" stop-opacity="0.16"/><stop offset="0.8015" stop-color="#6882f0" stop-opacity="0.04"/><stop offset="0.8387" stop-color="#6882f0" stop-opacity="0"/></linearGradient><linearGradient id="hz" x1="0" x2="1"><stop offset="0.0000" stop-color="#6882f0" stop-opacity="0.0"/><stop offset="0.2060" stop-color="#6882f0" stop-opacity="0.0"/><stop offset="0.2680" stop-color="#6882f0" stop-opacity="0.04"/><stop offset="0.3176" stop-color="#6882f0" stop-opacity="0.1"/><stop offset="0.3672" stop-color="#6882f0" stop-opacity="0.24"/><stop offset="0.3859" stop-color="#6882f0" stop-opacity="0.45"/><stop offset="0.4169" stop-color="#6882f0" stop-opacity="0.6"/><stop offset="0.4541" stop-color="#6882f0" stop-opacity="0.72"/><stop offset="0.4820" stop-color="#6882f0" stop-opacity="0.84"/><stop offset="0.4975" stop-color="#6882f0" stop-opacity="0.92"/><stop offset="0.5304" stop-color="#6882f0" stop-opacity="0.9"/><stop offset="0.5471" stop-color="#6882f0" stop-opacity="0.76"/><stop offset="0.5782" stop-color="#6882f0" stop-opacity="0.64"/><stop offset="0.6402" stop-color="#6882f0" stop-opacity="0.5"/><stop offset="0.7022" stop-color="#6882f0" stop-opacity="0.32"/><stop offset="0.7500" stop-color="#6882f0" stop-opacity="0.16"/><stop offset="0.8015" stop-color="#6882f0" stop-opacity="0.06"/><stop offset="0.8511" stop-color="#6882f0" stop-opacity="0.0"/><stop offset="1.0000" stop-color="#6882f0" stop-opacity="0.0"/></linearGradient><linearGradient id="co" x1="0" x2="1"><stop offset="0.4981" stop-color="#dde8ff" stop-opacity="0"/><stop offset="0.5000" stop-color="#dde8ff" stop-opacity="0.5"/><stop offset="0.5012" stop-color="#dde8ff" stop-opacity="0.95"/><stop offset="0.5050" stop-color="#dde8ff" stop-opacity="0.95"/><stop offset="0.5068" stop-color="#dde8ff" stop-opacity="0.45"/><stop offset="0.5093" stop-color="#dde8ff" stop-opacity="0"/></linearGradient><linearGradient id="md" x1="0" x2="1"><stop offset="0.5037" stop-color="#86a0f4" stop-opacity="0"/><stop offset="0.5068" stop-color="#86a0f4" stop-opacity="0.7"/><stop offset="0.5273" stop-color="#86a0f4" stop-opacity="0.7"/><stop offset="0.5310" stop-color="#86a0f4" stop-opacity="0.5"/><stop offset="0.5378" stop-color="#86a0f4" stop-opacity="0.15"/><stop offset="0.5471" stop-color="#86a0f4" stop-opacity="0"/></linearGradient><linearGradient id="st" x1="0" x2="1"><stop offset="0.5161" stop-color="#c4d4ff" stop-opacity="0"/><stop offset="0.5285" stop-color="#c4d4ff" stop-opacity="0.8"/><stop offset="0.5409" stop-color="#c4d4ff" stop-opacity="0.9"/><stop offset="0.5484" stop-color="#c4d4ff" stop-opacity="0.45"/><stop offset="0.5583" stop-color="#c4d4ff" stop-opacity="0"/></linearGradient><filter id="wfn" x="268" y="699" width="1612" height="297" filterUnits="userSpaceOnUse" color-interpolation-filters="sRGB"><feColorMatrix in="SourceGraphic" type="matrix" values="0 0 0 1 0  0 0 0 1 0  0 0 0 1 0  0 0 0 0 1" result="I"/><feTurbulence type="fractalNoise" baseFrequency="0.9 1.9" numOctaves="1" seed="11" result="t"/><feColorMatrix in="t" type="matrix" values="1 0 0 0 0  1 0 0 0 0  1 0 0 0 0  0 0 0 0 1" result="N"/><feComposite in="I" in2="N" operator="arithmetic" k1="0" k2="1.7" k3="2.2" k4="-1.75" result="V"/><feColorMatrix in="V" type="matrix" values="0 0 0 0 0.41  0 0 0 0 0.51  0 0 0 0 0.94  1 0 0 0 0"/><feGaussianBlur stdDeviation="0.45"/></filter><filter id="wfc" x="268" y="699" width="1612" height="297" filterUnits="userSpaceOnUse" color-interpolation-filters="sRGB"><feTurbulence type="fractalNoise" baseFrequency="0.8 0.9" numOctaves="2" seed="4" result="t"/><feColorMatrix in="t" type="matrix" values="0 0 0 0 0  0 0 0 0 0  0 0 0 0 0  3 0 0 0 -0.7" result="m"/><feComposite in="SourceGraphic" in2="m" operator="in"/></filter><filter id="blr" x="-50%" y="-100%" width="200%" height="300%"><feGaussianBlur stdDeviation="2.2 1.3"/></filter><filter id="sblr" x="-10%" y="-10%" width="120%" height="120%"><feGaussianBlur stdDeviation="0.6"/></filter></defs><rect x="268" y="699" width="1612" height="297" fill="#030322"/><g filter="url(#wfn)"><rect x="268" y="699" width="1612" height="13.0" fill="url(#hz)" fill-opacity="0.8"/><rect x="268" y="699" width="1612" height="13.0" fill="url(#hzw)"/><rect x="268" y="712" width="1612" height="1.5" fill="url(#hz)" fill-opacity="0.25"/><rect x="268" y="712" width="1612" height="1.5" fill="url(#gl)"/><rect x="268" y="713.5" width="1612" height="15.0" fill="url(#hz)" fill-opacity="0.85"/><rect x="268" y="713.5" width="1612" height="15.0" fill="url(#hzw)"/><rect x="268" y="728.5" width="1612" height="31.0" fill="url(#hz)" fill-opacity="0.1"/><rect x="268" y="728.5" width="1612" height="31.0" fill="url(#gl)"/><rect x="268" y="759.5" width="1612" height="11.5" fill="url(#hz)" fill-opacity="0.8"/><rect x="268" y="771" width="1612" height="1.5" fill="url(#hz)" fill-opacity="0.3"/><rect x="268" y="771" width="1612" height="1.5" fill="url(#gl)"/><rect x="268" y="772.5" width="1612" height="27.5" fill="url(#hz)" fill-opacity="0.78"/><rect x="268" y="800" width="1612" height="3.5" fill="url(#hz)" fill-opacity="0.3"/><rect x="268" y="800" width="1612" height="3.5" fill="url(#gl)"/><rect x="268" y="803.5" width="1612" height="15.0" fill="url(#hz)" fill-opacity="0.45"/><rect x="268" y="803.5" width="1612" height="15.0" fill="url(#gl)"/><rect x="268" y="818.5" width="1612" height="7.5" fill="url(#hz)" fill-opacity="0.6"/><rect x="268" y="826" width="1612" height="1.0" fill="url(#hz)" fill-opacity="0.3"/><rect x="268" y="826" width="1612" height="1.0" fill="url(#gl)"/><rect x="268" y="827" width="1612" height="28.0" fill="url(#hz)" fill-opacity="0.8"/><rect x="268" y="855" width="1612" height="1.5" fill="url(#hz)" fill-opacity="0.35"/><rect x="268" y="855" width="1612" height="1.5" fill="url(#gl)"/><rect x="268" y="856.5" width="1612" height="38.2" fill="url(#hz)" fill-opacity="0.8"/><rect x="268" y="894.7" width="1612" height="8.7" fill="url(#hz)" fill-opacity="0.15"/><rect x="268" y="894.7" width="1612" height="8.7" fill="url(#gl)"/><rect x="268" y="903.4" width="1612" height="22.3" fill="url(#hz)" fill-opacity="0.65"/><rect x="268" y="925.7" width="1612" height="7.3" fill="url(#hz)" fill-opacity="0.3"/><rect x="268" y="925.7" width="1612" height="7.3" fill="url(#gl)"/><rect x="268" y="933" width="1612" height="7.0" fill="url(#hz)" fill-opacity="0.62"/><rect x="268" y="940" width="1612" height="1.5" fill="url(#hz)" fill-opacity="0.3"/><rect x="268" y="940" width="1612" height="1.5" fill="url(#gl)"/><rect x="268" y="941.5" width="1612" height="5.5" fill="url(#hz)" fill-opacity="0.6"/><rect x="268" y="947" width="1612" height="1.5" fill="url(#hz)" fill-opacity="0.3"/><rect x="268" y="947" width="1612" height="1.5" fill="url(#gl)"/><rect x="268" y="948.5" width="1612" height="26.5" fill="url(#hz)" fill-opacity="0.6"/><rect x="268" y="975" width="1612" height="10.0" fill="url(#hz)" fill-opacity="0.18"/><rect x="268" y="975" width="1612" height="10.0" fill="url(#gl)"/><rect x="268" y="985" width="1612" height="11.0" fill="url(#hz)" fill-opacity="0.55"/></g><path d="M276 760 V996" stroke="#3a4aa8" stroke-width="1.3" stroke-dasharray="2 5 1 9" stroke-opacity="0.75"/><path d="M378 760 V996" stroke="#3a4aa8" stroke-width="1.3" stroke-dasharray="2 5 1 9" stroke-opacity="0.75"/><path d="M479 760 V996" stroke="#3a4aa8" stroke-width="1.3" stroke-dasharray="2 5 1 9" stroke-opacity="0.75"/><path d="M579 760 V996" stroke="#3a4aa8" stroke-width="1.3" stroke-dasharray="2 5 1 9" stroke-opacity="0.75"/><path d="M681 760 V996" stroke="#3a4aa8" stroke-width="1.3" stroke-dasharray="2 5 1 9" stroke-opacity="0.75"/><path d="M780 760 V996" stroke="#3a4aa8" stroke-width="1.3" stroke-dasharray="2 5 1 9" stroke-opacity="0.75"/><path d="M1475 760 V996" stroke="#3a4aa8" stroke-width="1.3" stroke-dasharray="2 5 1 9" stroke-opacity="0.75"/><path d="M1582 760 V996" stroke="#3a4aa8" stroke-width="1.3" stroke-dasharray="2 5 1 9" stroke-opacity="0.75"/><path d="M1683 760 V996" stroke="#3a4aa8" stroke-width="1.3" stroke-dasharray="2 5 1 9" stroke-opacity="0.75"/><path d="M1784 760 V996" stroke="#3a4aa8" stroke-width="1.3" stroke-dasharray="2 5 1 9" stroke-opacity="0.75"/><g filter="url(#wfc)"><rect x="268" y="699" width="1612" height="29.5" fill="url(#md)" fill-opacity="0.76"/><rect x="268" y="728.5" width="1612" height="31.0" fill="url(#md)" fill-opacity="0.56"/><rect x="268" y="759.5" width="1612" height="40.5" fill="url(#md)" fill-opacity="0.76"/><rect x="268" y="800" width="1612" height="26.0" fill="url(#md)" fill-opacity="0.60"/><rect x="268" y="826" width="1612" height="68.7" fill="url(#md)" fill-opacity="0.76"/><rect x="268" y="894.7" width="1612" height="8.7" fill="url(#md)" fill-opacity="0.60"/><rect x="268" y="903.4" width="1612" height="92.6" fill="url(#md)" fill-opacity="0.76"/></g><path d="M1107 709 C1116 714 1103 707 1101 703 M1092 700 C1083 713 1090 701 1097 708 M1085 714 C1108 697 1095 707 1111 712 M1097 719 C1122 726 1105 722 1113 718 M1100 720 C1091 736 1089 742 1085 736 M1114 733 C1113 715 1101 737 1111 729 M1114 750 C1097 768 1097 738 1097 751 M1087 757 C1102 754 1114 744 1120 752 M1105 754 C1088 747 1122 747 1106 745 M1088 768 C1097 779 1110 784 1113 779 M1117 774 C1107 784 1102 772 1120 782 M1092 781 C1116 781 1102 783 1090 768 M1094 790 C1095 801 1124 797 1090 785 M1100 788 C1113 781 1090 799 1119 792 M1111 797 C1106 800 1094 792 1106 790 M1084 816 C1107 816 1118 814 1118 802 M1093 810 C1086 800 1084 798 1119 820 M1099 804 C1086 813 1095 812 1115 815 M1090 830 C1082 836 1119 837 1110 832 M1111 824 C1114 824 1112 826 1101 825 M1108 829 C1094 840 1093 831 1086 830 M1087 856 C1124 847 1111 854 1102 859 M1103 843 C1096 847 1125 841 1113 864 M1087 843 C1100 857 1081 858 1113 859 M1097 875 C1100 870 1112 885 1092 869 M1109 876 C1102 880 1123 866 1093 875 M1100 877 C1115 880 1114 881 1110 884 M1107 895 C1108 910 1123 914 1117 898 M1084 897 C1087 902 1084 895 1095 898 M1116 905 C1123 906 1089 896 1101 893 M1093 933 C1118 915 1111 916 1096 919 M1104 920 C1101 923 1108 918 1098 933 M1090 922 C1123 911 1116 937 1094 918 M1101 939 C1091 934 1104 936 1106 947 M1095 944 C1086 950 1117 945 1116 943 M1086 941 C1090 950 1118 953 1099 945 M1104 956 C1114 955 1083 967 1116 964 M1105 963 C1095 956 1096 957 1101 965 M1105 966 C1103 965 1089 956 1087 956 M1101 977 C1085 984 1104 973 1108 970 M1107 978 C1117 969 1082 972 1103 969 M1102 976 C1102 968 1118 981 1090 977 M1091 1001 C1121 1009 1098 1008 1116 996 M1116 1002 C1108 999 1114 1000 1084 993 M1089 1004 C1089 1010 1105 1003 1103 1003 " fill="none" stroke="#b4c8ff" stroke-width="1.8" stroke-opacity="0.6" filter="url(#sblr)"/><rect x="268" y="712.5" width="1612" height="1.3" fill="#02021a" fill-opacity="0.42"/><rect x="268" y="771.5" width="1612" height="1.3" fill="#02021a" fill-opacity="0.42"/><rect x="268" y="797" width="1612" height="1.3" fill="#02021a" fill-opacity="0.42"/><rect x="268" y="801" width="1612" height="1.3" fill="#02021a" fill-opacity="0.42"/><rect x="268" y="824" width="1612" height="1.3" fill="#02021a" fill-opacity="0.42"/><rect x="268" y="847" width="1612" height="1.3" fill="#02021a" fill-opacity="0.42"/><rect x="268" y="856" width="1612" height="1.3" fill="#02021a" fill-opacity="0.42"/><rect x="268" y="869" width="1612" height="1.3" fill="#02021a" fill-opacity="0.42"/><rect x="268" y="878" width="1612" height="1.3" fill="#02021a" fill-opacity="0.42"/><rect x="268" y="897" width="1612" height="1.3" fill="#02021a" fill-opacity="0.42"/><rect x="268" y="915" width="1612" height="1.3" fill="#02021a" fill-opacity="0.42"/><rect x="268" y="926" width="1612" height="1.3" fill="#02021a" fill-opacity="0.42"/><rect x="268" y="940" width="1612" height="1.3" fill="#02021a" fill-opacity="0.42"/><rect x="268" y="947" width="1612" height="1.3" fill="#02021a" fill-opacity="0.42"/><rect x="268" y="957" width="1612" height="1.3" fill="#02021a" fill-opacity="0.42"/><rect x="268" y="975" width="1612" height="1.3" fill="#02021a" fill-opacity="0.42"/><rect x="268" y="699" width="1612" height="297" fill="url(#co)"/><g filter="url(#blr)" fill="#d4e0ff"><ellipse cx="1136" cy="721" rx="12.5" ry="3" fill-opacity="0.68"/><ellipse cx="1136" cy="763" rx="12.5" ry="2.5" fill-opacity="0.45"/><ellipse cx="1136" cy="785" rx="12.5" ry="3" fill-opacity="0.64"/><ellipse cx="1136" cy="798" rx="12.5" ry="2.5" fill-opacity="0.45"/><ellipse cx="1136" cy="818.7" rx="12.5" ry="4" fill-opacity="0.75"/><ellipse cx="1136" cy="846" rx="12.5" ry="2.5" fill-opacity="0.45"/><ellipse cx="1136" cy="862" rx="12.5" ry="2.5" fill-opacity="0.52"/><ellipse cx="1136" cy="878.4" rx="12.5" ry="3" fill-opacity="0.68"/><ellipse cx="1136" cy="909" rx="12.5" ry="4" fill-opacity="0.75"/><ellipse cx="1136" cy="936" rx="12.5" ry="2.5" fill-opacity="0.38"/><ellipse cx="1136" cy="965" rx="12.5" ry="2.5" fill-opacity="0.38"/></g><path d="M1072.5 699 V996 M1122.5 699 V996" stroke="#3aaa3a" stroke-width="1" stroke-dasharray="3 2" stroke-opacity="0.8"/><rect x="994.6" y="927" width="158.2" height="59.2" rx="3" fill="#000" fill-opacity="0.55"/></svg>
<div class="t" style="left:1003.70px;top:938.48px;font:normal 13.7px/16.44px 'Liberation Mono',monospace;color:#fff;">Freq:</div>
<div class="t" style="left:1085.45px;top:938.48px;font:normal 13.7px/16.44px 'Liberation Mono',monospace;color:#fff;">434 MHz</div>
<div class="t" style="left:1003.70px;top:961.68px;font:normal 13.7px/16.44px 'Liberation Mono',monospace;color:#fff;transform:scaleX(0.9966);transform-origin:0 0;">Span: ±64.305 kHz</div>
<div class="a" style="left:1880px;top:145px;width:1px;height:880px;background:#8a8a8a"></div>
<div class="a" style="left:1881px;top:145px;width:37px;height:880px;background:#000"></div>
<div class="a" style="left:1881px;top:146px;width:37px;height:15px;background:linear-gradient(#3a3a3a,#2a2a2a)"></div>
<div class="a" style="left:1881px;top:175px;width:37px;height:1px;background:#3a3a3a"></div>
<div class="t" style="left:1889.10px;top:154.80px;font:normal 12px/14.40px 'Liberation Sans',sans-serif;color:#fff;transform:scaleX(0.8831);transform-origin:0 0;">Auto</div>
<svg class="a" style="left:0px;top:0px;" width="1920" height="1048" viewBox="0 0 1920 1048"><defs><linearGradient id="cbg" x1="0" y1="0" x2="0" y2="1"><stop offset="0" stop-color="#ffff00"/><stop offset="0.1" stop-color="#ffffff"/><stop offset="0.33" stop-color="#f6f6ff"/><stop offset="0.47" stop-color="#c4d0f6"/><stop offset="0.63" stop-color="#7088e0"/><stop offset="0.8" stop-color="#3046a8"/><stop offset="0.95" stop-color="#0c0c48"/><stop offset="1" stop-color="#040424"/></linearGradient></defs><rect x="1883" y="270" width="34.5" height="360" fill="url(#cbg)"/><rect x="1883" y="630" width="34.5" height="1.6" fill="#fff"/><rect x="1886.2" y="272.79999999999995" width="27.8" height="17.2" rx="3.5" fill="#6e6e20" fill-opacity="0.85"/><rect x="1886.2" y="325.79999999999995" width="27.8" height="17.2" rx="3.5" fill="#707070" fill-opacity="0.9"/><rect x="1886.2" y="378.79999999999995" width="27.8" height="17.2" rx="3.5" fill="#707070" fill-opacity="0.9"/><rect x="1886.2" y="431.79999999999995" width="27.8" height="17.2" rx="3.5" fill="#5a5e78" fill-opacity="0.9"/><rect x="1886.2" y="484.79999999999995" width="27.8" height="17.2" rx="3.5" fill="#3a4888" fill-opacity="0.9"/><rect x="1886.2" y="537.8" width="27.8" height="17.2" rx="3.5" fill="#283070" fill-opacity="0.9"/><rect x="1886.2" y="590.8" width="27.8" height="17.2" rx="3.5" fill="#161848" fill-opacity="0.9"/></svg>
<div class="t" style="left:1894.77px;top:222.60px;font:normal 9px/10.80px 'Liberation Sans',sans-serif;color:#bbbbbb;transform:scaleX(0.8500);transform-origin:0 0;">-10</div>
<div class="t" style="left:1894.77px;top:275.60px;font:normal 9px/10.80px 'Liberation Sans',sans-serif;color:#dddddd;transform:scaleX(0.8500);transform-origin:0 0;">-20</div>
<div class="t" style="left:1894.77px;top:328.60px;font:normal 9px/10.80px 'Liberation Sans',sans-serif;color:#dddddd;transform:scaleX(0.8500);transform-origin:0 0;">-30</div>
<div class="t" style="left:1894.77px;top:381.60px;font:normal 9px/10.80px 'Liberation Sans',sans-serif;color:#dddddd;transform:scaleX(0.8500);transform-origin:0 0;">-40</div>
<div class="t" style="left:1894.77px;top:434.60px;font:normal 9px/10.80px 'Liberation Sans',sans-serif;color:#dddddd;transform:scaleX(0.8500);transform-origin:0 0;">-50</div>
<div class="t" style="left:1894.77px;top:487.60px;font:normal 9px/10.80px 'Liberation Sans',sans-serif;color:#dddddd;transform:scaleX(0.8500);transform-origin:0 0;">-60</div>
<div class="t" style="left:1894.77px;top:540.60px;font:normal 9px/10.80px 'Liberation Sans',sans-serif;color:#dddddd;transform:scaleX(0.8500);transform-origin:0 0;">-70</div>
<div class="t" style="left:1894.77px;top:593.60px;font:normal 9px/10.80px 'Liberation Sans',sans-serif;color:#dddddd;transform:scaleX(0.8500);transform-origin:0 0;">-80</div>
<div class="t" style="left:1894.77px;top:646.60px;font:normal 9px/10.80px 'Liberation Sans',sans-serif;color:#bbbbbb;transform:scaleX(0.8500);transform-origin:0 0;">-90</div>
<div class="t" style="left:1892.65px;top:699.60px;font:normal 9px/10.80px 'Liberation Sans',sans-serif;color:#bbbbbb;transform:scaleX(0.8500);transform-origin:0 0;">-100</div>
<div class="t" style="left:1892.93px;top:752.60px;font:normal 9px/10.80px 'Liberation Sans',sans-serif;color:#bbbbbb;transform:scaleX(0.8500);transform-origin:0 0;">-110</div>
<div class="t" style="left:1892.65px;top:805.60px;font:normal 9px/10.80px 'Liberation Sans',sans-serif;color:#bbbbbb;transform:scaleX(0.8500);transform-origin:0 0;">-120</div>
<div class="t" style="left:1892.65px;top:858.60px;font:normal 9px/10.80px 'Liberation Sans',sans-serif;color:#bbbbbb;transform:scaleX(0.8500);transform-origin:0 0;">-130</div>
<div class="t" style="left:1892.65px;top:911.60px;font:normal 9px/10.80px 'Liberation Sans',sans-serif;color:#bbbbbb;transform:scaleX(0.8500);transform-origin:0 0;">-140</div>
<div class="t" style="left:1892.65px;top:964.60px;font:normal 9px/10.80px 'Liberation Sans',sans-serif;color:#bbbbbb;transform:scaleX(0.8500);transform-origin:0 0;">-150</div>
<div class="a" style="left:268px;top:996px;width:1612px;height:28px;background:#f4f4f4"></div>
<div class="a" style="left:268px;top:996px;width:1612px;height:1px;background:#9a9a9a"></div>
<div class="a" style="left:270px;top:998px;width:25px;height:24px;background:#e1e1e1;border:1px solid #adadad"></div>
<div class="a" style="left:295px;top:997px;width:1467px;height:26px;background:linear-gradient(#3e3e3e,#262626 45%,#000 50%,#000)"></div>
<div class="a" style="left:881px;top:997px;width:293px;height:26px;background:linear-gradient(#5e5e5e,#3a3a3a 40%,#2e2e2e 55%,#5a5a20 85%,#7a7a20)"></div>
<div class="a" style="left:881px;top:997px;width:1px;height:26px;background:#cfcfcf"></div>
<div class="a" style="left:1173px;top:997px;width:1px;height:26px;background:#cfcfcf"></div>
<svg class="a" style="left:0px;top:0px;" width="1920" height="1048" viewBox="0 0 1920 1048"><rect x="297.6" y="997.5" width="2" height="4" fill="#8a8a8a"/><rect x="309.0" y="997.5" width="2" height="2.5" fill="#8a8a8a"/><rect x="320.4" y="997.5" width="2" height="4" fill="#8a8a8a"/><rect x="331.8" y="997.5" width="2" height="2.5" fill="#8a8a8a"/><rect x="343.2" y="997.5" width="2" height="5" fill="#8a8a8a"/><rect x="354.6" y="997.5" width="2" height="2.5" fill="#8a8a8a"/><rect x="366.0" y="997.5" width="2" height="4" fill="#8a8a8a"/><rect x="377.4" y="997.5" width="2" height="2.5" fill="#8a8a8a"/><rect x="388.8" y="997.5" width="2" height="4" fill="#8a8a8a"/><rect x="400.2" y="997.5" width="2" height="2.5" fill="#8a8a8a"/><rect x="411.6" y="997.5" width="2" height="4" fill="#8a8a8a"/><rect x="423.0" y="997.5" width="2" height="2.5" fill="#8a8a8a"/><rect x="434.4" y="997.5" width="2" height="4" fill="#8a8a8a"/><rect x="445.8" y="997.5" width="2" height="2.5" fill="#8a8a8a"/><rect x="457.2" y="997.5" width="2" height="5" fill="#8a8a8a"/><rect x="468.6" y="997.5" width="2" height="2.5" fill="#8a8a8a"/><rect x="480.0" y="997.5" width="2" height="4" fill="#8a8a8a"/><rect x="491.4" y="997.5" width="2" height="2.5" fill="#8a8a8a"/><rect x="502.8" y="997.5" width="2" height="4" fill="#8a8a8a"/><rect x="514.2" y="997.5" width="2" height="2.5" fill="#8a8a8a"/><rect x="525.6" y="997.5" width="2" height="4" fill="#8a8a8a"/><rect x="537.0" y="997.5" width="2" height="2.5" fill="#8a8a8a"/><rect x="548.4" y="997.5" width="2" height="4" fill="#8a8a8a"/><rect x="559.8" y="997.5" width="2" height="2.5" fill="#8a8a8a"/><rect x="571.2" y="997.5" width="2" height="5" fill="#8a8a8a"/><rect x="582.6" y="997.5" width="2" height="2.5" fill="#8a8a8a"/><rect x="594.0" y="997.5" width="2" height="4" fill="#8a8a8a"/><rect x="605.4" y="997.5" width="2" height="2.5" fill="#8a8a8a"/><rect x="616.8" y="997.5" width="2" height="4" fill="#8a8a8a"/><rect x="628.2" y="997.5" width="2" height="2.5" fill="#8a8a8a"/><rect x="639.6" y="997.5" width="2" height="4" fill="#8a8a8a"/><rect x="651.0" y="997.5" width="2" height="2.5" fill="#8a8a8a"/><rect x="662.4" y="997.5" width="2" height="4" fill="#8a8a8a"/><rect x="673.8" y="997.5" width="2" height="2.5" fill="#8a8a8a"/><rect x="685.2" y="997.5" width="2" height="5" fill="#8a8a8a"/><rect x="696.6" y="997.5" width="2" height="2.5" fill="#8a8a8a"/><rect x="708.0" y="997.5" width="2" height="4" fill="#8a8a8a"/><rect x="719.4" y="997.5" width="2" height="2.5" fill="#8a8a8a"/><rect x="730.8" y="997.5" width="2" height="4" fill="#8a8a8a"/><rect x="742.1" y="997.5" width="2" height="2.5" fill="#8a8a8a"/><rect x="753.5" y="997.5" width="2" height="4" fill="#8a8a8a"/><rect x="764.9" y="997.5" width="2" height="2.5" fill="#8a8a8a"/><rect x="776.3" y="997.5" width="2" height="4" fill="#8a8a8a"/><rect x="787.7" y="997.5" width="2" height="2.5" fill="#8a8a8a"/><rect x="799.1" y="997.5" width="2" height="5" fill="#8a8a8a"/><rect x="810.5" y="997.5" width="2" height="2.5" fill="#8a8a8a"/><rect x="821.9" y="997.5" width="2" height="4" fill="#8a8a8a"/><rect x="833.3" y="997.5" width="2" height="2.5" fill="#8a8a8a"/><rect x="844.7" y="997.5" width="2" height="4" fill="#8a8a8a"/><rect x="856.1" y="997.5" width="2" height="2.5" fill="#8a8a8a"/><rect x="867.5" y="997.5" width="2" height="4" fill="#8a8a8a"/><rect x="878.9" y="997.5" width="2" height="2.5" fill="#8a8a8a"/><rect x="890.3" y="997.5" width="2" height="4" fill="#8a8a8a"/><rect x="901.7" y="997.5" width="2" height="2.5" fill="#8a8a8a"/><rect x="913.1" y="997.5" width="2" height="5" fill="#8a8a8a"/><rect x="924.5" y="997.5" width="2" height="2.5" fill="#8a8a8a"/><rect x="935.9" y="997.5" width="2" height="4" fill="#8a8a8a"/><rect x="947.3" y="997.5" width="2" height="2.5" fill="#8a8a8a"/><rect x="958.7" y="997.5" width="2" height="4" fill="#8a8a8a"/><rect x="970.1" y="997.5" width="2" height="2.5" fill="#8a8a8a"/><rect x="981.5" y="997.5" width="2" height="4" fill="#8a8a8a"/><rect x="992.9" y="997.5" width="2" height="2.5" fill="#8a8a8a"/><rect x="1004.3" y="997.5" width="2" height="4" fill="#8a8a8a"/><rect x="1015.7" y="997.5" width="2" height="2.5" fill="#8a8a8a"/><rect x="1027.1" y="997.5" width="2" height="5" fill="#8a8a8a"/><rect x="1038.5" y="997.5" width="2" height="2.5" fill="#8a8a8a"/><rect x="1049.9" y="997.5" width="2" height="4" fill="#8a8a8a"/><rect x="1061.3" y="997.5" width="2" height="2.5" fill="#8a8a8a"/><rect x="1072.7" y="997.5" width="2" height="4" fill="#8a8a8a"/><rect x="1084.1" y="997.5" width="2" height="2.5" fill="#8a8a8a"/><rect x="1095.5" y="997.5" width="2" height="4" fill="#8a8a8a"/><rect x="1106.9" y="997.5" width="2" height="2.5" fill="#8a8a8a"/><rect x="1118.3" y="997.5" width="2" height="4" fill="#8a8a8a"/><rect x="1129.7" y="997.5" width="2" height="2.5" fill="#8a8a8a"/><rect x="1141.1" y="997.5" width="2" height="5" fill="#8a8a8a"/><rect x="1152.5" y="997.5" width="2" height="2.5" fill="#8a8a8a"/><rect x="1163.9" y="997.5" width="2" height="4" fill="#8a8a8a"/><rect x="1175.3" y="997.5" width="2" height="2.5" fill="#8a8a8a"/><rect x="1186.7" y="997.5" width="2" height="4" fill="#8a8a8a"/><rect x="1198.1" y="997.5" width="2" height="2.5" fill="#8a8a8a"/><rect x="1209.5" y="997.5" width="2" height="4" fill="#8a8a8a"/><rect x="1220.9" y="997.5" width="2" height="2.5" fill="#8a8a8a"/><rect x="1232.3" y="997.5" width="2" height="4" fill="#8a8a8a"/><rect x="1243.7" y="997.5" width="2" height="2.5" fill="#8a8a8a"/><rect x="1255.1" y="997.5" width="2" height="5" fill="#8a8a8a"/><rect x="1266.5" y="997.5" width="2" height="2.5" fill="#8a8a8a"/><rect x="1277.9" y="997.5" width="2" height="4" fill="#8a8a8a"/><rect x="1289.3" y="997.5" width="2" height="2.5" fill="#8a8a8a"/><rect x="1300.7" y="997.5" width="2" height="4" fill="#8a8a8a"/><rect x="1312.0" y="997.5" width="2" height="2.5" fill="#8a8a8a"/><rect x="1323.4" y="997.5" width="2" height="4" fill="#8a8a8a"/><rect x="1334.8" y="997.5" width="2" height="2.5" fill="#8a8a8a"/><rect x="1346.2" y="997.5" width="2" height="4" fill="#8a8a8a"/><rect x="1357.6" y="997.5" width="2" height="2.5" fill="#8a8a8a"/><rect x="1369.0" y="997.5" width="2" height="5" fill="#8a8a8a"/><rect x="1380.4" y="997.5" width="2" height="2.5" fill="#8a8a8a"/><rect x="1391.8" y="997.5" width="2" height="4" fill="#8a8a8a"/><rect x="1403.2" y="997.5" width="2" height="2.5" fill="#8a8a8a"/><rect x="1414.6" y="997.5" width="2" height="4" fill="#8a8a8a"/><rect x="1426.0" y="997.5" width="2" height="2.5" fill="#8a8a8a"/><rect x="1437.4" y="997.5" width="2" height="4" fill="#8a8a8a"/><rect x="1448.8" y="997.5" width="2" height="2.5" fill="#8a8a8a"/><rect x="1460.2" y="997.5" width="2" height="4" fill="#8a8a8a"/><rect x="1471.6" y="997.5" width="2" height="2.5" fill="#8a8a8a"/><rect x="1483.0" y="997.5" width="2" height="5" fill="#8a8a8a"/><rect x="1494.4" y="997.5" width="2" height="2.5" fill="#8a8a8a"/><rect x="1505.8" y="997.5" width="2" height="4" fill="#8a8a8a"/><rect x="1517.2" y="997.5" width="2" height="2.5" fill="#8a8a8a"/><rect x="1528.6" y="997.5" width="2" height="4" fill="#8a8a8a"/><rect x="1540.0" y="997.5" width="2" height="2.5" fill="#8a8a8a"/><rect x="1551.4" y="997.5" width="2" height="4" fill="#8a8a8a"/><rect x="1562.8" y="997.5" width="2" height="2.5" fill="#8a8a8a"/><rect x="1574.2" y="997.5" width="2" height="4" fill="#8a8a8a"/><rect x="1585.6" y="997.5" width="2" height="2.5" fill="#8a8a8a"/><rect x="1597.0" y="997.5" width="2" height="5" fill="#8a8a8a"/><rect x="1608.4" y="997.5" width="2" height="2.5" fill="#8a8a8a"/><rect x="1619.8" y="997.5" width="2" height="4" fill="#8a8a8a"/><rect x="1631.2" y="997.5" width="2" height="2.5" fill="#8a8a8a"/><rect x="1642.6" y="997.5" width="2" height="4" fill="#8a8a8a"/><rect x="1654.0" y="997.5" width="2" height="2.5" fill="#8a8a8a"/><rect x="1665.4" y="997.5" width="2" height="4" fill="#8a8a8a"/><rect x="1676.8" y="997.5" width="2" height="2.5" fill="#8a8a8a"/><rect x="1688.2" y="997.5" width="2" height="4" fill="#8a8a8a"/><rect x="1699.6" y="997.5" width="2" height="2.5" fill="#8a8a8a"/><rect x="1711.0" y="997.5" width="2" height="5" fill="#8a8a8a"/><rect x="1722.4" y="997.5" width="2" height="2.5" fill="#8a8a8a"/><rect x="1733.8" y="997.5" width="2" height="4" fill="#8a8a8a"/><rect x="1745.2" y="997.5" width="2" height="2.5" fill="#8a8a8a"/><rect x="1756.6" y="997.5" width="2" height="4" fill="#8a8a8a"/><rect x="1027.6" y="997" width="1.3" height="26" fill="#f0f000"/><circle cx="282" cy="1009.8" r="7.2" fill="#fff" stroke="#444" stroke-width="1.4"/><path d="M278.3 1009.8 l3-2.6 v5.2z M281.3 1009.8 l3-2.6 v5.2z" fill="#111"/></svg>
<div class="a" style="left:1763px;top:998px;width:37px;height:24px;background:#e1e1e1;border:1px solid #b5b5b5"></div>
<div class="a" style="left:1802px;top:998px;width:50px;height:24px;background:#e1e1e1;border:1px solid #b5b5b5"></div>
<div class="a" style="left:1854px;top:998px;width:25px;height:24px;background:#e1e1e1;border:1px solid #b5b5b5"></div>
<svg class="a" style="left:0px;top:0px;" width="1920" height="1048" viewBox="0 0 1920 1048"><rect x="1773.5" y="1007" width="15" height="9" fill="#f4f4f4" stroke="#222" stroke-width="1"/><path d="M1775.5 1009.5 h11 M1775.5 1011.7 h11 M1775.5 1013.9 h11" stroke="#333" stroke-width="0.9" stroke-dasharray="1.2 0.8"/><path d="M1781 1007 v-1.5 l3-2" stroke="#333" fill="none" stroke-width="0.9"/><path d="M1839.8 1006.5 v7 l4-3.5z" fill="#000"/><circle cx="1865.8" cy="1010" r="7.2" fill="#fff" stroke="#444" stroke-width="1.4"/><path d="M1864.8 1010 l-3-2.6 v5.2z M1867.8 1010 l-3-2.6 v5.2z" fill="#111"/></svg>
<div class="t" style="left:1811.00px;top:1002.80px;font:normal 12px/14.40px 'Liberation Sans',sans-serif;color:#000;transform:scaleX(0.9469);transform-origin:0 0;">x5</div>
<div class="t" style="left:321.47px;top:1005.60px;font:normal 13px/15.60px 'Liberation Sans',sans-serif;color:#d6d6d6;transform:scaleX(0.9683);transform-origin:0 0;">433.700</div>
<div class="t" style="left:435.45px;top:1005.60px;font:normal 13px/15.60px 'Liberation Sans',sans-serif;color:#d6d6d6;transform:scaleX(0.9683);transform-origin:0 0;">433.750</div>
<div class="t" style="left:549.43px;top:1005.60px;font:normal 13px/15.60px 'Liberation Sans',sans-serif;color:#d6d6d6;transform:scaleX(0.9683);transform-origin:0 0;">433.800</div>
<div class="t" style="left:663.41px;top:1005.60px;font:normal 13px/15.60px 'Liberation Sans',sans-serif;color:#d6d6d6;transform:scaleX(0.9683);transform-origin:0 0;">433.850</div>
<div class="t" style="left:777.39px;top:1005.60px;font:normal 13px/15.60px 'Liberation Sans',sans-serif;color:#d6d6d6;transform:scaleX(0.9683);transform-origin:0 0;">433.900</div>
<div class="t" style="left:891.37px;top:1005.60px;font:normal 13px/15.60px 'Liberation Sans',sans-serif;color:#d6d6d6;transform:scaleX(0.9683);transform-origin:0 0;">433.950</div>
<div class="t" style="left:1005.35px;top:1005.60px;font:normal 13px/15.60px 'Liberation Sans',sans-serif;color:#d6d6d6;transform:scaleX(0.9683);transform-origin:0 0;">434.000</div>
<div class="t" style="left:1119.33px;top:1005.60px;font:normal 13px/15.60px 'Liberation Sans',sans-serif;color:#d6d6d6;transform:scaleX(0.9683);transform-origin:0 0;">434.050</div>
<div class="t" style="left:1233.31px;top:1005.60px;font:normal 13px/15.60px 'Liberation Sans',sans-serif;color:#d6d6d6;transform:scaleX(0.9683);transform-origin:0 0;">434.100</div>
<div class="t" style="left:1347.29px;top:1005.60px;font:normal 13px/15.60px 'Liberation Sans',sans-serif;color:#d6d6d6;transform:scaleX(0.9683);transform-origin:0 0;">434.150</div>
<div class="t" style="left:1461.27px;top:1005.60px;font:normal 13px/15.60px 'Liberation Sans',sans-serif;color:#d6d6d6;transform:scaleX(0.9683);transform-origin:0 0;">434.200</div>
<div class="t" style="left:1575.25px;top:1005.60px;font:normal 13px/15.60px 'Liberation Sans',sans-serif;color:#d6d6d6;transform:scaleX(0.9683);transform-origin:0 0;">434.250</div>
<div class="t" style="left:1689.23px;top:1005.60px;font:normal 13px/15.60px 'Liberation Sans',sans-serif;color:#d6d6d6;transform:scaleX(0.9683);transform-origin:0 0;">434.300</div>
<div class="a" style="left:0px;top:1024px;width:1920px;height:24px;background:#f0f0f0;border-top:1px solid #fbfbfb"></div>
<div class="t" style="left:9.30px;top:1028.40px;font:normal 12px/14.40px 'Liberation Sans',sans-serif;color:#5a5a5a;transform:scaleX(0.8820);transform-origin:0 0;">SDRPlay RSP1, BW = 1.000 MHz</div>
<div class="t" style="left:1448.20px;top:1028.80px;font:normal 12px/14.40px 'Liberation Sans',sans-serif;color:#000;transform:scaleX(0.8558);transform-origin:0 0;">CPU: 2.4%</div>
<div class="t" style="left:1597.30px;top:1028.80px;font:normal 12px/14.40px 'Liberation Sans',sans-serif;color:#000;transform:scaleX(0.9340);transform-origin:0 0;">Audio: 26ms</div>
<div class="t" style="left:1758.30px;top:1028.80px;font:normal 12px/14.40px 'Liberation Sans',sans-serif;color:#000;transform:scaleX(0.8860);transform-origin:0 0;">Size: 503.7 MB</div>
<div class="a" style="left:1513px;top:1031px;width:70px;height:12px;background:#e6e6e6;border:1px solid #bcbcbc"></div>
<div class="a" style="left:1674px;top:1031px;width:70px;height:12px;background:#e6e6e6;border:1px solid #bcbcbc"></div>
<div class="a" style="left:1676px;top:1033px;width:32px;height:8px;background:#06b025"></div>
<div class="a" style="left:1845px;top:1031px;width:69px;height:12px;background:#e6e6e6;border:1px solid #bcbcbc"></div>
<div class="a" style="left:1847px;top:1033px;width:2px;height:8px;background:#06b025"></div>
</body></html>
